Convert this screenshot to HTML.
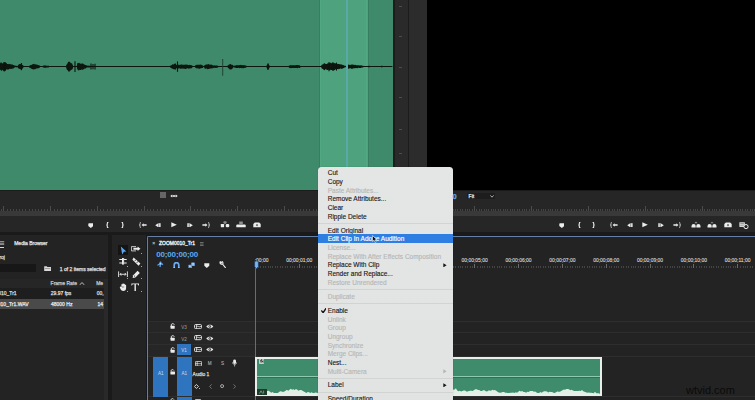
<!DOCTYPE html><html><head><meta charset="utf-8"><style>
html,body{margin:0;padding:0;}
body{width:755px;height:400px;overflow:hidden;position:relative;font-family:"Liberation Sans", sans-serif;background:#1a1a1a}
</style></head><body><div style="position:absolute;left:0px;top:0px;width:755px;height:400px;background:#1a1a1a;"></div><div style="position:absolute;left:0px;top:0px;width:393px;height:190px;background:#3f8a6a;"></div><div style="position:absolute;left:320px;top:0px;width:47.5px;height:190px;background:#4ea27d;"></div><div style="position:absolute;left:319px;top:0px;width:1px;height:190px;background:#397d60;"></div><div style="position:absolute;left:367.5px;top:0px;width:1px;height:190px;background:#397d60;"></div><div style="position:absolute;left:320.3px;top:0px;width:1px;height:190px;background:#51a883;"></div><div style="position:absolute;left:366.3px;top:0px;width:1px;height:190px;background:#51a883;"></div><svg style="position:absolute;left:0px;top:0px;" width="393" height="190" viewBox="0 0 393 190"><polygon points="0.0,63.57 0.6,62.54 1.2,62.30 1.8,62.99 2.4,63.35 3.0,63.71 3.6,62.66 4.2,62.72 4.8,61.95 5.4,62.45 6.0,62.67 6.6,63.23 7.2,64.03 7.8,63.94 8.4,64.14 9.0,63.81 9.6,63.99 10.2,64.50 10.8,64.10 11.4,64.51 12.0,64.54 12.6,64.47 13.2,65.00 13.8,65.07 14.4,65.31 15.0,66.10 15.6,65.58 16.2,65.71 16.8,65.93 17.4,66.10 18.0,65.40 18.6,64.55 19.2,64.14 19.8,64.01 20.4,63.89 21.0,63.81 21.6,64.35 22.2,64.91 22.8,64.92 23.4,65.70 24.0,66.10 24.6,66.10 25.2,66.10 25.8,66.10 26.4,66.10 27.0,66.10 27.6,66.10 28.2,66.10 28.8,66.10 29.4,65.79 30.0,65.48 30.6,65.11 31.2,64.92 31.8,64.65 32.4,64.23 33.0,64.32 33.6,63.97 34.2,63.83 34.8,64.38 35.4,64.41 36.0,64.07 36.6,64.76 37.2,64.84 37.8,64.77 38.4,65.28 39.0,65.31 39.6,65.47 40.2,66.10 40.8,66.10 41.4,66.10 42.0,66.10 42.6,66.10 43.2,65.72 43.8,65.58 44.4,65.42 45.0,65.37 45.6,65.52 46.2,65.63 46.8,65.66 47.4,65.65 48.0,65.67 48.6,65.85 49.2,66.10 49.8,66.10 50.4,66.10 51.0,66.10 51.6,66.10 52.2,66.10 52.8,66.10 53.4,66.10 54.0,66.10 54.6,66.10 55.2,66.10 55.8,66.10 56.4,66.10 57.0,66.10 57.6,66.10 58.2,66.10 58.8,66.10 59.4,66.10 60.0,66.10 60.6,66.10 61.2,66.10 61.8,66.10 62.4,66.10 63.0,66.10 63.6,66.10 64.2,66.10 64.8,66.10 65.4,66.10 66.0,66.10 66.6,64.40 67.2,63.88 67.8,62.72 68.4,62.82 69.0,62.34 69.6,61.38 70.2,62.29 70.8,63.16 71.4,63.21 72.0,63.22 72.6,64.75 73.2,66.10 73.8,66.10 74.4,66.10 75.0,66.10 75.6,66.10 76.2,66.10 76.8,66.10 77.4,62.93 78.0,62.99 78.6,63.10 79.2,62.80 79.8,63.58 80.4,63.77 81.0,63.48 81.6,63.80 82.2,63.44 82.8,63.55 83.4,63.74 84.0,64.40 84.6,64.47 85.2,64.90 85.8,64.99 86.4,65.01 87.0,66.10 87.6,65.54 88.2,65.43 88.8,65.68 89.4,65.78 90.0,65.80 90.6,66.10 91.2,66.10 91.8,66.10 92.4,66.10 93.0,66.10 93.6,66.10 94.2,66.10 94.8,66.10 95.4,66.10 96.0,66.10 96.6,66.10 97.2,66.10 97.8,66.10 98.4,66.10 99.0,66.10 99.6,66.10 100.2,66.10 100.8,66.10 101.4,66.10 102.0,66.10 102.6,66.10 103.2,66.10 103.8,66.10 104.4,66.10 105.0,66.10 105.6,66.10 106.2,66.10 106.8,66.10 107.4,66.10 108.0,66.10 108.6,66.10 109.2,66.10 109.8,66.10 110.4,66.10 111.0,66.10 111.6,66.10 112.2,66.10 112.8,66.10 113.4,66.10 114.0,66.10 114.6,66.10 115.2,66.10 115.8,66.10 116.4,66.10 117.0,66.10 117.6,66.10 118.2,66.10 118.8,66.10 119.4,66.10 120.0,66.10 120.6,66.10 121.2,66.10 121.8,66.10 122.4,66.10 123.0,66.10 123.6,66.10 124.2,66.10 124.8,66.10 125.4,66.10 126.0,66.10 126.6,66.10 127.2,66.10 127.8,66.10 128.4,66.10 129.0,66.10 129.6,66.10 130.2,66.10 130.8,66.10 131.4,66.10 132.0,66.10 132.6,66.10 133.2,66.10 133.8,66.10 134.4,66.10 135.0,66.10 135.6,66.10 136.2,66.10 136.8,66.10 137.4,66.10 138.0,66.10 138.6,66.10 139.2,66.10 139.8,66.10 140.4,66.10 141.0,66.10 141.6,66.10 142.2,66.10 142.8,66.10 143.4,66.10 144.0,66.10 144.6,66.10 145.2,66.10 145.8,66.10 146.4,66.10 147.0,66.10 147.6,66.10 148.2,66.10 148.8,66.10 149.4,66.10 150.0,66.10 150.6,66.10 151.2,66.10 151.8,66.10 152.4,66.10 153.0,66.10 153.6,66.10 154.2,66.10 154.8,66.10 155.4,66.10 156.0,66.10 156.6,66.10 157.2,66.10 157.8,66.10 158.4,66.10 159.0,66.10 159.6,66.10 160.2,66.10 160.8,66.10 161.4,66.10 162.0,66.10 162.6,66.10 163.2,66.10 163.8,66.10 164.4,66.10 165.0,66.10 165.6,66.10 166.2,66.10 166.8,66.10 167.4,66.10 168.0,66.10 168.6,66.10 169.2,66.10 169.8,66.10 170.4,65.71 171.0,65.28 171.6,65.24 172.2,64.48 172.8,64.32 173.4,64.54 174.0,64.23 174.6,63.47 175.2,63.83 175.8,63.34 176.4,65.22 177.0,64.74 177.6,65.11 178.2,64.56 178.8,64.89 179.4,64.98 180.0,64.39 180.6,64.64 181.2,64.67 181.8,64.37 182.4,64.75 183.0,64.74 183.6,64.72 184.2,64.81 184.8,64.66 185.4,64.51 186.0,64.64 186.6,64.61 187.2,64.63 187.8,64.73 188.4,65.05 189.0,64.98 189.6,64.69 190.2,64.99 190.8,64.91 191.4,65.22 192.0,65.19 192.6,66.10 193.2,66.10 193.8,66.10 194.4,66.10 195.0,66.10 195.6,64.97 196.2,64.97 196.8,64.68 197.4,64.78 198.0,64.78 198.6,64.79 199.2,64.77 199.8,64.65 200.4,64.55 201.0,64.86 201.6,64.79 202.2,65.27 202.8,65.39 203.4,66.10 204.0,66.10 204.6,65.13 205.2,64.59 205.8,64.90 206.4,64.48 207.0,64.25 207.6,64.44 208.2,64.15 208.8,64.09 209.4,64.72 210.0,64.51 210.6,64.79 211.2,64.52 211.8,64.73 212.4,65.16 213.0,64.92 213.6,65.72 214.2,65.36 214.8,65.56 215.4,65.56 216.0,65.48 216.6,65.47 217.2,65.41 217.8,65.75 218.4,66.10 219.0,66.10 219.6,66.10 220.2,66.10 220.8,66.10 221.4,66.10 222.0,66.10 222.6,66.10 223.2,66.10 223.8,66.10 224.4,66.10 225.0,66.10 225.6,66.10 226.2,66.10 226.8,66.10 227.4,66.10 228.0,65.14 228.6,64.99 229.2,64.28 229.8,64.53 230.4,63.85 231.0,64.46 231.6,64.66 232.2,64.64 232.8,64.97 233.4,65.85 234.0,66.10 234.6,65.38 235.2,65.50 235.8,65.48 236.4,65.31 237.0,65.05 237.6,65.14 238.2,65.18 238.8,65.21 239.4,64.95 240.0,65.23 240.6,64.84 241.2,64.92 241.8,65.11 242.4,65.19 243.0,65.08 243.6,65.30 244.2,65.18 244.8,65.37 245.4,65.57 246.0,65.62 246.6,66.10 247.2,66.10 247.8,66.10 248.4,66.10 249.0,66.10 249.6,66.10 250.2,66.10 250.8,66.10 251.4,66.10 252.0,66.10 252.6,66.10 253.2,66.10 253.8,66.10 254.4,66.10 255.0,66.10 255.6,66.10 256.2,66.10 256.8,66.10 257.4,66.10 258.0,66.10 258.6,66.10 259.2,66.10 259.8,66.10 260.4,66.10 261.0,66.10 261.6,66.10 262.2,66.10 262.8,66.10 263.4,66.10 264.0,66.10 264.6,66.10 265.2,66.10 265.8,66.10 266.4,66.10 267.0,64.68 267.6,64.23 268.2,63.31 268.8,64.42 269.4,65.49 270.0,66.10 270.6,66.10 271.2,66.10 271.8,66.10 272.4,66.10 273.0,66.10 273.6,66.10 274.2,66.10 274.8,66.10 275.4,66.10 276.0,66.10 276.6,66.10 277.2,66.10 277.8,66.10 278.4,66.10 279.0,66.10 279.6,66.10 280.2,66.10 280.8,66.10 281.4,66.10 282.0,66.10 282.6,66.10 283.2,66.10 283.8,66.10 284.4,66.10 285.0,66.10 285.6,66.10 286.2,66.10 286.8,66.10 287.4,66.10 288.0,66.10 288.6,66.10 289.2,65.56 289.8,65.46 290.4,65.09 291.0,65.36 291.6,65.28 292.2,65.39 292.8,65.12 293.4,65.24 294.0,65.33 294.6,65.28 295.2,65.31 295.8,65.19 296.4,65.07 297.0,65.03 297.6,65.10 298.2,65.31 298.8,65.11 299.4,65.29 300.0,65.63 300.6,66.10 301.2,66.10 301.8,66.10 302.4,66.10 303.0,66.10 303.6,66.10 304.2,66.10 304.8,66.10 305.4,66.10 306.0,66.10 306.6,66.10 307.2,66.10 307.8,66.10 308.4,66.10 309.0,66.10 309.6,66.10 310.2,66.10 310.8,66.10 311.4,66.10 312.0,66.10 312.6,66.10 313.2,66.10 313.8,66.10 314.4,66.10 315.0,66.10 315.6,66.10 316.2,66.10 316.8,66.10 317.4,66.10 318.0,66.10 318.6,66.10 319.2,66.10 319.8,66.10 320.4,66.10 321.0,66.10 321.6,65.07 322.2,64.54 322.8,64.55 323.4,63.90 324.0,63.27 324.6,63.20 325.2,63.70 325.8,64.00 326.4,63.99 327.0,63.91 327.6,63.32 328.2,63.14 328.8,63.21 329.4,62.77 330.0,63.07 330.6,62.84 331.2,62.72 331.8,63.54 332.4,62.75 333.0,62.78 333.6,63.13 334.2,63.22 334.8,62.98 335.4,63.23 336.0,63.87 336.6,63.36 337.2,63.67 337.8,64.28 338.4,63.94 339.0,64.03 339.6,64.25 340.2,64.38 340.8,64.17 341.4,64.24 342.0,65.01 342.6,64.65 343.2,65.03 343.8,65.35 344.4,65.62 345.0,66.10 345.6,66.10 346.2,64.81 346.8,64.27 347.4,64.39 348.0,64.37 348.6,64.84 349.2,64.69 349.8,65.03 350.4,64.77 351.0,65.00 351.6,64.91 352.2,65.13 352.8,64.66 353.4,64.65 354.0,64.70 354.6,65.04 355.2,64.73 355.8,65.12 356.4,65.20 357.0,65.33 357.6,65.28 358.2,65.34 358.8,65.27 359.4,65.38 360.0,65.23 360.6,65.40 361.2,65.37 361.8,65.54 362.4,65.65 363.0,65.79 363.6,66.10 364.2,66.10 364.8,66.10 365.4,66.10 366.0,66.10 366.6,66.10 367.2,66.10 367.8,66.10 368.4,65.92 369.0,65.66 369.6,65.87 370.2,66.10 370.8,66.10 371.4,66.10 372.0,66.10 372.6,66.10 373.2,66.10 373.8,66.10 374.4,66.10 375.0,66.10 375.6,66.10 376.2,66.10 376.8,66.10 377.4,66.10 378.0,66.10 378.6,66.10 379.2,66.10 379.8,66.10 380.4,66.10 381.0,66.10 381.6,65.87 382.2,65.66 382.8,66.10 383.4,66.10 384.0,66.10 384.6,66.10 385.2,66.10 385.8,66.10 386.4,66.10 387.0,66.10 387.6,66.10 388.2,66.10 388.8,66.10 389.4,66.10 390.0,66.10 390.6,66.10 391.2,66.10 391.8,66.10 392.4,66.10 392.4,67.10 391.8,67.10 391.2,67.10 390.6,67.10 390.0,67.10 389.4,67.10 388.8,67.10 388.2,67.10 387.6,67.10 387.0,67.10 386.4,67.10 385.8,67.10 385.2,67.10 384.6,67.10 384.0,67.10 383.4,67.10 382.8,67.10 382.2,67.34 381.6,67.44 381.0,67.10 380.4,67.10 379.8,67.10 379.2,67.10 378.6,67.10 378.0,67.10 377.4,67.10 376.8,67.10 376.2,67.10 375.6,67.10 375.0,67.10 374.4,67.10 373.8,67.10 373.2,67.10 372.6,67.10 372.0,67.10 371.4,67.10 370.8,67.10 370.2,67.10 369.6,67.30 369.0,67.32 368.4,67.22 367.8,67.10 367.2,67.10 366.6,67.10 366.0,67.10 365.4,67.10 364.8,67.10 364.2,67.10 363.6,67.10 363.0,67.38 362.4,67.46 361.8,67.43 361.2,67.69 360.6,67.91 360.0,67.94 359.4,68.07 358.8,67.79 358.2,67.87 357.6,68.24 357.0,68.24 356.4,67.88 355.8,68.12 355.2,68.24 354.6,68.17 354.0,68.15 353.4,68.43 352.8,68.11 352.2,68.52 351.6,68.61 351.0,68.33 350.4,68.33 349.8,68.48 349.2,68.20 348.6,68.80 348.0,68.70 347.4,68.60 346.8,68.36 346.2,68.66 345.6,67.10 345.0,67.10 344.4,67.71 343.8,68.19 343.2,68.07 342.6,68.64 342.0,68.48 341.4,68.93 340.8,68.52 340.2,68.55 339.6,68.91 339.0,68.85 338.4,69.28 337.8,69.12 337.2,68.99 336.6,69.39 336.0,69.45 335.4,69.35 334.8,70.05 334.2,70.22 333.6,69.94 333.0,70.70 332.4,69.81 331.8,69.90 331.2,69.88 330.6,69.64 330.0,70.17 329.4,70.37 328.8,69.43 328.2,70.12 327.6,69.96 327.0,70.06 326.4,69.45 325.8,69.00 325.2,69.51 324.6,70.35 324.0,69.95 323.4,69.61 322.8,68.96 322.2,68.71 321.6,68.01 321.0,67.10 320.4,67.10 319.8,67.10 319.2,67.10 318.6,67.10 318.0,67.10 317.4,67.10 316.8,67.10 316.2,67.10 315.6,67.10 315.0,67.10 314.4,67.10 313.8,67.10 313.2,67.10 312.6,67.10 312.0,67.10 311.4,67.10 310.8,67.10 310.2,67.10 309.6,67.10 309.0,67.10 308.4,67.10 307.8,67.10 307.2,67.10 306.6,67.10 306.0,67.10 305.4,67.10 304.8,67.10 304.2,67.10 303.6,67.10 303.0,67.10 302.4,67.10 301.8,67.10 301.2,67.10 300.6,67.10 300.0,67.89 299.4,67.88 298.8,67.73 298.2,67.86 297.6,68.18 297.0,68.12 296.4,68.10 295.8,67.97 295.2,67.88 294.6,68.08 294.0,68.01 293.4,68.12 292.8,68.09 292.2,68.00 291.6,67.94 291.0,68.18 290.4,67.92 289.8,68.04 289.2,67.75 288.6,67.10 288.0,67.10 287.4,67.10 286.8,67.10 286.2,67.10 285.6,67.10 285.0,67.10 284.4,67.10 283.8,67.10 283.2,67.10 282.6,67.10 282.0,67.10 281.4,67.10 280.8,67.10 280.2,67.10 279.6,67.10 279.0,67.10 278.4,67.10 277.8,67.10 277.2,67.10 276.6,67.10 276.0,67.10 275.4,67.10 274.8,67.10 274.2,67.10 273.6,67.10 273.0,67.10 272.4,67.10 271.8,67.10 271.2,67.10 270.6,67.10 270.0,67.10 269.4,67.78 268.8,68.75 268.2,69.70 267.6,69.68 267.0,68.45 266.4,67.10 265.8,67.10 265.2,67.10 264.6,67.10 264.0,67.10 263.4,67.10 262.8,67.10 262.2,67.10 261.6,67.10 261.0,67.10 260.4,67.10 259.8,67.10 259.2,67.10 258.6,67.10 258.0,67.10 257.4,67.10 256.8,67.10 256.2,67.10 255.6,67.10 255.0,67.10 254.4,67.10 253.8,67.10 253.2,67.10 252.6,67.10 252.0,67.10 251.4,67.10 250.8,67.10 250.2,67.10 249.6,67.10 249.0,67.10 248.4,67.10 247.8,67.10 247.2,67.10 246.6,67.10 246.0,67.85 245.4,67.66 244.8,67.81 244.2,67.99 243.6,68.14 243.0,68.26 242.4,68.07 241.8,68.27 241.2,68.08 240.6,67.93 240.0,68.12 239.4,68.16 238.8,67.87 238.2,67.85 237.6,67.90 237.0,67.92 236.4,67.89 235.8,67.79 235.2,67.72 234.6,67.70 234.0,67.10 233.4,67.31 232.8,68.43 232.2,68.48 231.6,69.15 231.0,69.40 230.4,69.50 229.8,69.39 229.2,68.73 228.6,68.19 228.0,68.12 227.4,67.10 226.8,67.10 226.2,67.10 225.6,67.10 225.0,67.10 224.4,67.10 223.8,67.10 223.2,67.10 222.6,67.10 222.0,67.10 221.4,67.10 220.8,67.10 220.2,67.10 219.6,67.10 219.0,67.10 218.4,67.10 217.8,67.70 217.2,67.58 216.6,67.92 216.0,67.66 215.4,67.95 214.8,67.70 214.2,67.92 213.6,67.81 213.0,68.22 212.4,68.23 211.8,68.40 211.2,68.21 210.6,68.49 210.0,68.57 209.4,68.68 208.8,68.99 208.2,69.12 207.6,69.36 207.0,69.01 206.4,68.37 205.8,68.67 205.2,68.68 204.6,68.43 204.0,67.10 203.4,67.10 202.8,67.89 202.2,68.10 201.6,68.02 201.0,68.57 200.4,68.23 199.8,68.66 199.2,68.72 198.6,68.46 198.0,68.53 197.4,68.36 196.8,68.25 196.2,68.33 195.6,68.10 195.0,67.10 194.4,67.10 193.8,67.10 193.2,67.10 192.6,67.10 192.0,68.02 191.4,68.23 190.8,68.42 190.2,68.33 189.6,68.40 189.0,68.41 188.4,68.66 187.8,68.31 187.2,68.23 186.6,68.61 186.0,68.90 185.4,68.91 184.8,68.61 184.2,68.94 183.6,68.59 183.0,68.70 182.4,68.48 181.8,68.41 181.2,68.83 180.6,68.83 180.0,68.60 179.4,68.15 178.8,68.44 178.2,68.45 177.6,68.48 177.0,68.41 176.4,67.99 175.8,69.28 175.2,69.90 174.6,69.20 174.0,69.37 173.4,69.14 172.8,68.68 172.2,68.64 171.6,68.27 171.0,67.98 170.4,67.39 169.8,67.10 169.2,67.10 168.6,67.10 168.0,67.10 167.4,67.10 166.8,67.10 166.2,67.10 165.6,67.10 165.0,67.10 164.4,67.10 163.8,67.10 163.2,67.10 162.6,67.10 162.0,67.10 161.4,67.10 160.8,67.10 160.2,67.10 159.6,67.10 159.0,67.10 158.4,67.10 157.8,67.10 157.2,67.10 156.6,67.10 156.0,67.10 155.4,67.10 154.8,67.10 154.2,67.10 153.6,67.10 153.0,67.10 152.4,67.10 151.8,67.10 151.2,67.10 150.6,67.10 150.0,67.10 149.4,67.10 148.8,67.10 148.2,67.10 147.6,67.10 147.0,67.10 146.4,67.10 145.8,67.10 145.2,67.10 144.6,67.10 144.0,67.10 143.4,67.10 142.8,67.10 142.2,67.10 141.6,67.10 141.0,67.10 140.4,67.10 139.8,67.10 139.2,67.10 138.6,67.10 138.0,67.10 137.4,67.10 136.8,67.10 136.2,67.10 135.6,67.10 135.0,67.10 134.4,67.10 133.8,67.10 133.2,67.10 132.6,67.10 132.0,67.10 131.4,67.10 130.8,67.10 130.2,67.10 129.6,67.10 129.0,67.10 128.4,67.10 127.8,67.10 127.2,67.10 126.6,67.10 126.0,67.10 125.4,67.10 124.8,67.10 124.2,67.10 123.6,67.10 123.0,67.10 122.4,67.10 121.8,67.10 121.2,67.10 120.6,67.10 120.0,67.10 119.4,67.10 118.8,67.10 118.2,67.10 117.6,67.10 117.0,67.10 116.4,67.10 115.8,67.10 115.2,67.10 114.6,67.10 114.0,67.10 113.4,67.10 112.8,67.10 112.2,67.10 111.6,67.10 111.0,67.10 110.4,67.10 109.8,67.10 109.2,67.10 108.6,67.10 108.0,67.10 107.4,67.10 106.8,67.10 106.2,67.10 105.6,67.10 105.0,67.10 104.4,67.10 103.8,67.10 103.2,67.10 102.6,67.10 102.0,67.10 101.4,67.10 100.8,67.10 100.2,67.10 99.6,67.10 99.0,67.10 98.4,67.10 97.8,67.10 97.2,67.10 96.6,67.10 96.0,67.10 95.4,67.10 94.8,67.10 94.2,67.10 93.6,67.10 93.0,67.10 92.4,67.10 91.8,67.10 91.2,67.10 90.6,67.10 90.0,67.47 89.4,67.43 88.8,67.52 88.2,67.57 87.6,67.67 87.0,67.10 86.4,67.95 85.8,68.47 85.2,68.47 84.6,68.48 84.0,69.04 83.4,69.39 82.8,69.61 82.2,69.93 81.6,69.29 81.0,69.98 80.4,70.09 79.8,69.74 79.2,70.21 78.6,70.64 78.0,69.58 77.4,69.80 76.8,67.10 76.2,67.10 75.6,67.10 75.0,67.10 74.4,67.10 73.8,67.10 73.2,67.10 72.6,69.15 72.0,69.29 71.4,69.90 70.8,70.06 70.2,70.94 69.6,72.05 69.0,70.49 68.4,70.52 67.8,69.89 67.2,70.26 66.6,69.02 66.0,67.10 65.4,67.10 64.8,67.10 64.2,67.10 63.6,67.10 63.0,67.10 62.4,67.10 61.8,67.10 61.2,67.10 60.6,67.10 60.0,67.10 59.4,67.10 58.8,67.10 58.2,67.10 57.6,67.10 57.0,67.10 56.4,67.10 55.8,67.10 55.2,67.10 54.6,67.10 54.0,67.10 53.4,67.10 52.8,67.10 52.2,67.10 51.6,67.10 51.0,67.10 50.4,67.10 49.8,67.10 49.2,67.10 48.6,67.40 48.0,67.44 47.4,67.53 46.8,67.54 46.2,67.78 45.6,67.68 45.0,67.80 44.4,67.73 43.8,67.41 43.2,67.51 42.6,67.10 42.0,67.10 41.4,67.10 40.8,67.10 40.2,67.10 39.6,67.64 39.0,67.98 38.4,68.15 37.8,68.23 37.2,68.52 36.6,68.48 36.0,68.53 35.4,69.20 34.8,68.93 34.2,69.41 33.6,69.52 33.0,69.22 32.4,69.37 31.8,68.64 31.2,68.76 30.6,68.07 30.0,67.92 29.4,67.49 28.8,67.10 28.2,67.10 27.6,67.10 27.0,67.10 26.4,67.10 25.8,67.10 25.2,67.10 24.6,67.10 24.0,67.10 23.4,67.35 22.8,68.47 22.2,68.73 21.6,69.00 21.0,69.48 20.4,69.19 19.8,69.11 19.2,68.65 18.6,68.52 18.0,68.11 17.4,67.10 16.8,67.36 16.2,67.59 15.6,67.36 15.0,67.10 14.4,67.71 13.8,68.31 13.2,68.40 12.6,68.67 12.0,68.55 11.4,68.90 10.8,68.90 10.2,68.82 9.6,68.79 9.0,69.15 8.4,69.44 7.8,69.75 7.2,69.14 6.6,69.39 6.0,69.46 5.4,70.50 4.8,71.74 4.2,70.63 3.6,71.10 3.0,69.51 2.4,70.37 1.8,70.86 1.2,70.66 0.6,69.90 0.0,69.44" fill="#0d160f"/><line x1="4" y1="62.00" x2="4" y2="71.20" stroke="#0c140e" stroke-width="1.1"/><line x1="5.2" y1="62.40" x2="5.2" y2="70.80" stroke="#0c140e" stroke-width="1.1"/><line x1="21.5" y1="63.00" x2="21.5" y2="70.20" stroke="#0c140e" stroke-width="1.1"/><line x1="68.5" y1="61.80" x2="68.5" y2="71.40" stroke="#0c140e" stroke-width="1.1"/><line x1="75" y1="61.20" x2="75" y2="72.00" stroke="#0c140e" stroke-width="1.1"/><line x1="91" y1="63.60" x2="91" y2="69.60" stroke="#0c140e" stroke-width="1.1"/><line x1="93" y1="64.00" x2="93" y2="69.20" stroke="#0c140e" stroke-width="1.1"/><line x1="95" y1="63.80" x2="95" y2="69.40" stroke="#0c140e" stroke-width="1.1"/><line x1="177.5" y1="61.40" x2="177.5" y2="71.80" stroke="#0c140e" stroke-width="1.1"/><line x1="268" y1="63.50" x2="268" y2="69.70" stroke="#0c140e" stroke-width="1.1"/><line x1="329" y1="62.00" x2="329" y2="71.20" stroke="#0c140e" stroke-width="1.1"/><line x1="333" y1="62.20" x2="333" y2="71.00" stroke="#0c140e" stroke-width="1.1"/><line x1="336.5" y1="62.60" x2="336.5" y2="70.60" stroke="#0c140e" stroke-width="1.1"/><line x1="352" y1="64.20" x2="352" y2="69.00" stroke="#0c140e" stroke-width="1.1"/><line x1="222.7" y1="59" x2="222.7" y2="75.8" stroke="#1d3d2e" stroke-width="0.9"/></svg><div style="position:absolute;left:346.2px;top:0px;width:1.7px;height:190px;background:#58a9a8;"></div><div style="position:absolute;left:0px;top:189.6px;width:393px;height:1.8px;background:#1c1c1c;"></div><div style="position:absolute;left:393px;top:0px;width:2px;height:232px;background:#1c1c1c;"></div><div style="position:absolute;left:395px;top:0px;width:13px;height:232px;background:#2a2a2a;"></div><div style="position:absolute;left:408px;top:0px;width:1px;height:232px;background:#1c1c1c;"></div><div style="position:absolute;left:409px;top:0px;width:18px;height:232px;background:#2c2c2c;"></div><div style="position:absolute;left:399px;top:5.5px;width:3px;height:1px;background:#4c4c4c;"></div><div style="position:absolute;left:399px;top:36.1px;width:3px;height:1px;background:#4c4c4c;"></div><div style="position:absolute;left:399px;top:67.2px;width:3px;height:1px;background:#4c4c4c;"></div><div style="position:absolute;left:399px;top:97.3px;width:3px;height:1px;background:#4c4c4c;"></div><div style="position:absolute;left:399px;top:128.5px;width:3px;height:1px;background:#4c4c4c;"></div><div style="position:absolute;left:399px;top:153.0px;width:3px;height:1px;background:#4c4c4c;"></div><div style="position:absolute;left:427px;top:0px;width:328px;height:190px;background:#000;"></div><div style="position:absolute;left:0px;top:191px;width:393px;height:41px;background:#262626;"></div><div style="position:absolute;left:0.5px;top:209px;width:1px;height:2.3px;background:#444444;"></div><div style="position:absolute;left:3.3px;top:205.8px;width:1.1px;height:5.5px;background:#4c4c4c;"></div><div style="position:absolute;left:6.5px;top:209px;width:1px;height:2.3px;background:#444444;"></div><div style="position:absolute;left:9.5px;top:209px;width:1px;height:2.3px;background:#444444;"></div><div style="position:absolute;left:13.0px;top:209px;width:1px;height:2.3px;background:#444444;"></div><div style="position:absolute;left:16.0px;top:209px;width:1px;height:2.3px;background:#444444;"></div><div style="position:absolute;left:19.0px;top:209px;width:1px;height:2.3px;background:#444444;"></div><div style="position:absolute;left:22.0px;top:209px;width:1px;height:2.3px;background:#444444;"></div><div style="position:absolute;left:25.0px;top:209px;width:1px;height:2.3px;background:#444444;"></div><div style="position:absolute;left:28.5px;top:209px;width:1px;height:2.3px;background:#444444;"></div><div style="position:absolute;left:31.5px;top:209px;width:1px;height:2.3px;background:#444444;"></div><div style="position:absolute;left:34.5px;top:209px;width:1px;height:2.3px;background:#444444;"></div><div style="position:absolute;left:37.5px;top:209px;width:1px;height:2.3px;background:#444444;"></div><div style="position:absolute;left:41.0px;top:209px;width:1px;height:2.3px;background:#444444;"></div><div style="position:absolute;left:44.0px;top:209px;width:1px;height:2.3px;background:#444444;"></div><div style="position:absolute;left:47.0px;top:209px;width:1px;height:2.3px;background:#444444;"></div><div style="position:absolute;left:49.8px;top:205.8px;width:1.1px;height:5.5px;background:#4c4c4c;"></div><div style="position:absolute;left:53.5px;top:209px;width:1px;height:2.3px;background:#444444;"></div><div style="position:absolute;left:56.5px;top:209px;width:1px;height:2.3px;background:#444444;"></div><div style="position:absolute;left:59.5px;top:209px;width:1px;height:2.3px;background:#444444;"></div><div style="position:absolute;left:62.5px;top:209px;width:1px;height:2.3px;background:#444444;"></div><div style="position:absolute;left:66.0px;top:209px;width:1px;height:2.3px;background:#444444;"></div><div style="position:absolute;left:69.0px;top:209px;width:1px;height:2.3px;background:#444444;"></div><div style="position:absolute;left:72.0px;top:209px;width:1px;height:2.3px;background:#444444;"></div><div style="position:absolute;left:75.0px;top:209px;width:1px;height:2.3px;background:#444444;"></div><div style="position:absolute;left:78.5px;top:209px;width:1px;height:2.3px;background:#444444;"></div><div style="position:absolute;left:81.5px;top:209px;width:1px;height:2.3px;background:#444444;"></div><div style="position:absolute;left:84.5px;top:209px;width:1px;height:2.3px;background:#444444;"></div><div style="position:absolute;left:87.5px;top:209px;width:1px;height:2.3px;background:#444444;"></div><div style="position:absolute;left:91.0px;top:209px;width:1px;height:2.3px;background:#444444;"></div><div style="position:absolute;left:94.0px;top:209px;width:1px;height:2.3px;background:#444444;"></div><div style="position:absolute;left:96.8px;top:205.8px;width:1.1px;height:5.5px;background:#4c4c4c;"></div><div style="position:absolute;left:100.0px;top:209px;width:1px;height:2.3px;background:#444444;"></div><div style="position:absolute;left:103.0px;top:209px;width:1px;height:2.3px;background:#444444;"></div><div style="position:absolute;left:106.5px;top:209px;width:1px;height:2.3px;background:#444444;"></div><div style="position:absolute;left:109.5px;top:209px;width:1px;height:2.3px;background:#444444;"></div><div style="position:absolute;left:112.5px;top:209px;width:1px;height:2.3px;background:#444444;"></div><div style="position:absolute;left:115.5px;top:209px;width:1px;height:2.3px;background:#444444;"></div><div style="position:absolute;left:119.0px;top:209px;width:1px;height:2.3px;background:#444444;"></div><div style="position:absolute;left:122.0px;top:209px;width:1px;height:2.3px;background:#444444;"></div><div style="position:absolute;left:125.0px;top:209px;width:1px;height:2.3px;background:#444444;"></div><div style="position:absolute;left:128.0px;top:209px;width:1px;height:2.3px;background:#444444;"></div><div style="position:absolute;left:131.5px;top:209px;width:1px;height:2.3px;background:#444444;"></div><div style="position:absolute;left:134.5px;top:209px;width:1px;height:2.3px;background:#444444;"></div><div style="position:absolute;left:137.5px;top:209px;width:1px;height:2.3px;background:#444444;"></div><div style="position:absolute;left:140.5px;top:209px;width:1px;height:2.3px;background:#444444;"></div><div style="position:absolute;left:143.8px;top:205.8px;width:1.1px;height:5.5px;background:#4c4c4c;"></div><div style="position:absolute;left:147.0px;top:209px;width:1px;height:2.3px;background:#444444;"></div><div style="position:absolute;left:150.0px;top:209px;width:1px;height:2.3px;background:#444444;"></div><div style="position:absolute;left:153.0px;top:209px;width:1px;height:2.3px;background:#444444;"></div><div style="position:absolute;left:156.5px;top:209px;width:1px;height:2.3px;background:#444444;"></div><div style="position:absolute;left:159.5px;top:209px;width:1px;height:2.3px;background:#444444;"></div><div style="position:absolute;left:162.5px;top:209px;width:1px;height:2.3px;background:#444444;"></div><div style="position:absolute;left:165.5px;top:209px;width:1px;height:2.3px;background:#444444;"></div><div style="position:absolute;left:169.0px;top:209px;width:1px;height:2.3px;background:#444444;"></div><div style="position:absolute;left:172.0px;top:209px;width:1px;height:2.3px;background:#444444;"></div><div style="position:absolute;left:175.0px;top:209px;width:1px;height:2.3px;background:#444444;"></div><div style="position:absolute;left:178.0px;top:209px;width:1px;height:2.3px;background:#444444;"></div><div style="position:absolute;left:181.0px;top:209px;width:1px;height:2.3px;background:#444444;"></div><div style="position:absolute;left:184.5px;top:209px;width:1px;height:2.3px;background:#444444;"></div><div style="position:absolute;left:187.5px;top:209px;width:1px;height:2.3px;background:#444444;"></div><div style="position:absolute;left:190.3px;top:205.8px;width:1.1px;height:5.5px;background:#4c4c4c;"></div><div style="position:absolute;left:193.5px;top:209px;width:1px;height:2.3px;background:#444444;"></div><div style="position:absolute;left:197.0px;top:209px;width:1px;height:2.3px;background:#444444;"></div><div style="position:absolute;left:200.0px;top:209px;width:1px;height:2.3px;background:#444444;"></div><div style="position:absolute;left:203.0px;top:209px;width:1px;height:2.3px;background:#444444;"></div><div style="position:absolute;left:206.0px;top:209px;width:1px;height:2.3px;background:#444444;"></div><div style="position:absolute;left:209.5px;top:209px;width:1px;height:2.3px;background:#444444;"></div><div style="position:absolute;left:212.5px;top:209px;width:1px;height:2.3px;background:#444444;"></div><div style="position:absolute;left:215.5px;top:209px;width:1px;height:2.3px;background:#444444;"></div><div style="position:absolute;left:218.5px;top:209px;width:1px;height:2.3px;background:#444444;"></div><div style="position:absolute;left:222.0px;top:209px;width:1px;height:2.3px;background:#444444;"></div><div style="position:absolute;left:225.0px;top:209px;width:1px;height:2.3px;background:#444444;"></div><div style="position:absolute;left:228.0px;top:209px;width:1px;height:2.3px;background:#444444;"></div><div style="position:absolute;left:231.0px;top:209px;width:1px;height:2.3px;background:#444444;"></div><div style="position:absolute;left:234.5px;top:209px;width:1px;height:2.3px;background:#444444;"></div><div style="position:absolute;left:237.3px;top:205.8px;width:1.1px;height:5.5px;background:#4c4c4c;"></div><div style="position:absolute;left:240.5px;top:209px;width:1px;height:2.3px;background:#444444;"></div><div style="position:absolute;left:243.5px;top:209px;width:1px;height:2.3px;background:#444444;"></div><div style="position:absolute;left:247.0px;top:209px;width:1px;height:2.3px;background:#444444;"></div><div style="position:absolute;left:250.0px;top:209px;width:1px;height:2.3px;background:#444444;"></div><div style="position:absolute;left:253.0px;top:209px;width:1px;height:2.3px;background:#444444;"></div><div style="position:absolute;left:256.0px;top:209px;width:1px;height:2.3px;background:#444444;"></div><div style="position:absolute;left:259.0px;top:209px;width:1px;height:2.3px;background:#444444;"></div><div style="position:absolute;left:262.5px;top:209px;width:1px;height:2.3px;background:#444444;"></div><div style="position:absolute;left:265.5px;top:209px;width:1px;height:2.3px;background:#444444;"></div><div style="position:absolute;left:268.5px;top:209px;width:1px;height:2.3px;background:#444444;"></div><div style="position:absolute;left:271.5px;top:209px;width:1px;height:2.3px;background:#444444;"></div><div style="position:absolute;left:275.0px;top:209px;width:1px;height:2.3px;background:#444444;"></div><div style="position:absolute;left:278.0px;top:209px;width:1px;height:2.3px;background:#444444;"></div><div style="position:absolute;left:281.0px;top:209px;width:1px;height:2.3px;background:#444444;"></div><div style="position:absolute;left:283.8px;top:205.8px;width:1.1px;height:5.5px;background:#4c4c4c;"></div><div style="position:absolute;left:287.5px;top:209px;width:1px;height:2.3px;background:#444444;"></div><div style="position:absolute;left:290.5px;top:209px;width:1px;height:2.3px;background:#444444;"></div><div style="position:absolute;left:293.5px;top:209px;width:1px;height:2.3px;background:#444444;"></div><div style="position:absolute;left:296.5px;top:209px;width:1px;height:2.3px;background:#444444;"></div><div style="position:absolute;left:300.0px;top:209px;width:1px;height:2.3px;background:#444444;"></div><div style="position:absolute;left:303.0px;top:209px;width:1px;height:2.3px;background:#444444;"></div><div style="position:absolute;left:306.0px;top:209px;width:1px;height:2.3px;background:#444444;"></div><div style="position:absolute;left:309.0px;top:209px;width:1px;height:2.3px;background:#444444;"></div><div style="position:absolute;left:312.5px;top:209px;width:1px;height:2.3px;background:#444444;"></div><div style="position:absolute;left:315.5px;top:209px;width:1px;height:2.3px;background:#444444;"></div><div style="position:absolute;left:318.5px;top:209px;width:1px;height:2.3px;background:#444444;"></div><div style="position:absolute;left:321.5px;top:209px;width:1px;height:2.3px;background:#444444;"></div><div style="position:absolute;left:325.0px;top:209px;width:1px;height:2.3px;background:#444444;"></div><div style="position:absolute;left:328.0px;top:209px;width:1px;height:2.3px;background:#444444;"></div><div style="position:absolute;left:330.8px;top:205.8px;width:1.1px;height:5.5px;background:#4c4c4c;"></div><div style="position:absolute;left:334.0px;top:209px;width:1px;height:2.3px;background:#444444;"></div><div style="position:absolute;left:337.0px;top:209px;width:1px;height:2.3px;background:#444444;"></div><div style="position:absolute;left:340.5px;top:209px;width:1px;height:2.3px;background:#444444;"></div><div style="position:absolute;left:343.5px;top:209px;width:1px;height:2.3px;background:#444444;"></div><div style="position:absolute;left:346.5px;top:209px;width:1px;height:2.3px;background:#444444;"></div><div style="position:absolute;left:349.5px;top:209px;width:1px;height:2.3px;background:#444444;"></div><div style="position:absolute;left:353.0px;top:209px;width:1px;height:2.3px;background:#444444;"></div><div style="position:absolute;left:356.0px;top:209px;width:1px;height:2.3px;background:#444444;"></div><div style="position:absolute;left:359.0px;top:209px;width:1px;height:2.3px;background:#444444;"></div><div style="position:absolute;left:362.0px;top:209px;width:1px;height:2.3px;background:#444444;"></div><div style="position:absolute;left:365.5px;top:209px;width:1px;height:2.3px;background:#444444;"></div><div style="position:absolute;left:368.5px;top:209px;width:1px;height:2.3px;background:#444444;"></div><div style="position:absolute;left:371.5px;top:209px;width:1px;height:2.3px;background:#444444;"></div><div style="position:absolute;left:374.5px;top:209px;width:1px;height:2.3px;background:#444444;"></div><div style="position:absolute;left:377.8px;top:205.8px;width:1.1px;height:5.5px;background:#4c4c4c;"></div><div style="position:absolute;left:381.0px;top:209px;width:1px;height:2.3px;background:#444444;"></div><div style="position:absolute;left:384.0px;top:209px;width:1px;height:2.3px;background:#444444;"></div><div style="position:absolute;left:387.0px;top:209px;width:1px;height:2.3px;background:#444444;"></div><div style="position:absolute;left:390.5px;top:209px;width:1px;height:2.3px;background:#444444;"></div><div style="position:absolute;left:0px;top:211.3px;width:393px;height:5px;background:#393939;"></div><div style="position:absolute;left:427px;top:191px;width:328px;height:41px;background:#262626;"></div><div style="position:absolute;left:428.5px;top:209px;width:1px;height:2.3px;background:#444444;"></div><div style="position:absolute;left:431.0px;top:209px;width:1px;height:2.3px;background:#444444;"></div><div style="position:absolute;left:433.5px;top:209px;width:1px;height:2.3px;background:#444444;"></div><div style="position:absolute;left:436.0px;top:209px;width:1px;height:2.3px;background:#444444;"></div><div style="position:absolute;left:438.0px;top:209px;width:1px;height:2.3px;background:#444444;"></div><div style="position:absolute;left:440.5px;top:209px;width:1px;height:2.3px;background:#444444;"></div><div style="position:absolute;left:443.0px;top:209px;width:1px;height:2.3px;background:#444444;"></div><div style="position:absolute;left:445.5px;top:209px;width:1px;height:2.3px;background:#444444;"></div><div style="position:absolute;left:447.5px;top:209px;width:1px;height:2.3px;background:#444444;"></div><div style="position:absolute;left:450.0px;top:209px;width:1px;height:2.3px;background:#444444;"></div><div style="position:absolute;left:452.5px;top:209px;width:1px;height:2.3px;background:#444444;"></div><div style="position:absolute;left:455.0px;top:209px;width:1px;height:2.3px;background:#444444;"></div><div style="position:absolute;left:457.0px;top:209px;width:1px;height:2.3px;background:#444444;"></div><div style="position:absolute;left:459.5px;top:209px;width:1px;height:2.3px;background:#444444;"></div><div style="position:absolute;left:462.0px;top:209px;width:1px;height:2.3px;background:#444444;"></div><div style="position:absolute;left:464.5px;top:209px;width:1px;height:2.3px;background:#444444;"></div><div style="position:absolute;left:466.5px;top:209px;width:1px;height:2.3px;background:#444444;"></div><div style="position:absolute;left:469.0px;top:209px;width:1px;height:2.3px;background:#444444;"></div><div style="position:absolute;left:471.5px;top:209px;width:1px;height:2.3px;background:#444444;"></div><div style="position:absolute;left:473.8px;top:205.8px;width:1.1px;height:5.5px;background:#4c4c4c;"></div><div style="position:absolute;left:476.0px;top:209px;width:1px;height:2.3px;background:#444444;"></div><div style="position:absolute;left:478.5px;top:209px;width:1px;height:2.3px;background:#444444;"></div><div style="position:absolute;left:481.0px;top:209px;width:1px;height:2.3px;background:#444444;"></div><div style="position:absolute;left:483.5px;top:209px;width:1px;height:2.3px;background:#444444;"></div><div style="position:absolute;left:485.5px;top:209px;width:1px;height:2.3px;background:#444444;"></div><div style="position:absolute;left:488.0px;top:209px;width:1px;height:2.3px;background:#444444;"></div><div style="position:absolute;left:490.5px;top:209px;width:1px;height:2.3px;background:#444444;"></div><div style="position:absolute;left:493.0px;top:209px;width:1px;height:2.3px;background:#444444;"></div><div style="position:absolute;left:495.0px;top:209px;width:1px;height:2.3px;background:#444444;"></div><div style="position:absolute;left:497.5px;top:209px;width:1px;height:2.3px;background:#444444;"></div><div style="position:absolute;left:500.0px;top:209px;width:1px;height:2.3px;background:#444444;"></div><div style="position:absolute;left:502.5px;top:209px;width:1px;height:2.3px;background:#444444;"></div><div style="position:absolute;left:504.5px;top:209px;width:1px;height:2.3px;background:#444444;"></div><div style="position:absolute;left:507.0px;top:209px;width:1px;height:2.3px;background:#444444;"></div><div style="position:absolute;left:509.5px;top:209px;width:1px;height:2.3px;background:#444444;"></div><div style="position:absolute;left:512.0px;top:209px;width:1px;height:2.3px;background:#444444;"></div><div style="position:absolute;left:514.0px;top:209px;width:1px;height:2.3px;background:#444444;"></div><div style="position:absolute;left:516.5px;top:209px;width:1px;height:2.3px;background:#444444;"></div><div style="position:absolute;left:519.0px;top:209px;width:1px;height:2.3px;background:#444444;"></div><div style="position:absolute;left:521.5px;top:209px;width:1px;height:2.3px;background:#444444;"></div><div style="position:absolute;left:523.5px;top:209px;width:1px;height:2.3px;background:#444444;"></div><div style="position:absolute;left:526.0px;top:209px;width:1px;height:2.3px;background:#444444;"></div><div style="position:absolute;left:528.5px;top:209px;width:1px;height:2.3px;background:#444444;"></div><div style="position:absolute;left:530.8px;top:205.8px;width:1.1px;height:5.5px;background:#4c4c4c;"></div><div style="position:absolute;left:533.0px;top:209px;width:1px;height:2.3px;background:#444444;"></div><div style="position:absolute;left:535.5px;top:209px;width:1px;height:2.3px;background:#444444;"></div><div style="position:absolute;left:538.0px;top:209px;width:1px;height:2.3px;background:#444444;"></div><div style="position:absolute;left:540.5px;top:209px;width:1px;height:2.3px;background:#444444;"></div><div style="position:absolute;left:542.5px;top:209px;width:1px;height:2.3px;background:#444444;"></div><div style="position:absolute;left:545.0px;top:209px;width:1px;height:2.3px;background:#444444;"></div><div style="position:absolute;left:547.5px;top:209px;width:1px;height:2.3px;background:#444444;"></div><div style="position:absolute;left:550.0px;top:209px;width:1px;height:2.3px;background:#444444;"></div><div style="position:absolute;left:552.0px;top:209px;width:1px;height:2.3px;background:#444444;"></div><div style="position:absolute;left:554.5px;top:209px;width:1px;height:2.3px;background:#444444;"></div><div style="position:absolute;left:557.0px;top:209px;width:1px;height:2.3px;background:#444444;"></div><div style="position:absolute;left:559.5px;top:209px;width:1px;height:2.3px;background:#444444;"></div><div style="position:absolute;left:561.5px;top:209px;width:1px;height:2.3px;background:#444444;"></div><div style="position:absolute;left:564.0px;top:209px;width:1px;height:2.3px;background:#444444;"></div><div style="position:absolute;left:566.5px;top:209px;width:1px;height:2.3px;background:#444444;"></div><div style="position:absolute;left:569.0px;top:209px;width:1px;height:2.3px;background:#444444;"></div><div style="position:absolute;left:571.0px;top:209px;width:1px;height:2.3px;background:#444444;"></div><div style="position:absolute;left:573.5px;top:209px;width:1px;height:2.3px;background:#444444;"></div><div style="position:absolute;left:576.0px;top:209px;width:1px;height:2.3px;background:#444444;"></div><div style="position:absolute;left:578.5px;top:209px;width:1px;height:2.3px;background:#444444;"></div><div style="position:absolute;left:580.5px;top:209px;width:1px;height:2.3px;background:#444444;"></div><div style="position:absolute;left:583.0px;top:209px;width:1px;height:2.3px;background:#444444;"></div><div style="position:absolute;left:585.5px;top:209px;width:1px;height:2.3px;background:#444444;"></div><div style="position:absolute;left:587.8px;top:205.8px;width:1.1px;height:5.5px;background:#4c4c4c;"></div><div style="position:absolute;left:590.0px;top:209px;width:1px;height:2.3px;background:#444444;"></div><div style="position:absolute;left:592.5px;top:209px;width:1px;height:2.3px;background:#444444;"></div><div style="position:absolute;left:595.0px;top:209px;width:1px;height:2.3px;background:#444444;"></div><div style="position:absolute;left:597.5px;top:209px;width:1px;height:2.3px;background:#444444;"></div><div style="position:absolute;left:599.5px;top:209px;width:1px;height:2.3px;background:#444444;"></div><div style="position:absolute;left:602.0px;top:209px;width:1px;height:2.3px;background:#444444;"></div><div style="position:absolute;left:604.5px;top:209px;width:1px;height:2.3px;background:#444444;"></div><div style="position:absolute;left:607.0px;top:209px;width:1px;height:2.3px;background:#444444;"></div><div style="position:absolute;left:609.0px;top:209px;width:1px;height:2.3px;background:#444444;"></div><div style="position:absolute;left:611.5px;top:209px;width:1px;height:2.3px;background:#444444;"></div><div style="position:absolute;left:614.0px;top:209px;width:1px;height:2.3px;background:#444444;"></div><div style="position:absolute;left:616.5px;top:209px;width:1px;height:2.3px;background:#444444;"></div><div style="position:absolute;left:618.5px;top:209px;width:1px;height:2.3px;background:#444444;"></div><div style="position:absolute;left:621.0px;top:209px;width:1px;height:2.3px;background:#444444;"></div><div style="position:absolute;left:623.5px;top:209px;width:1px;height:2.3px;background:#444444;"></div><div style="position:absolute;left:626.0px;top:209px;width:1px;height:2.3px;background:#444444;"></div><div style="position:absolute;left:628.0px;top:209px;width:1px;height:2.3px;background:#444444;"></div><div style="position:absolute;left:630.5px;top:209px;width:1px;height:2.3px;background:#444444;"></div><div style="position:absolute;left:633.0px;top:209px;width:1px;height:2.3px;background:#444444;"></div><div style="position:absolute;left:635.5px;top:209px;width:1px;height:2.3px;background:#444444;"></div><div style="position:absolute;left:637.5px;top:209px;width:1px;height:2.3px;background:#444444;"></div><div style="position:absolute;left:640.0px;top:209px;width:1px;height:2.3px;background:#444444;"></div><div style="position:absolute;left:642.5px;top:209px;width:1px;height:2.3px;background:#444444;"></div><div style="position:absolute;left:644.8px;top:205.8px;width:1.1px;height:5.5px;background:#4c4c4c;"></div><div style="position:absolute;left:647.0px;top:209px;width:1px;height:2.3px;background:#444444;"></div><div style="position:absolute;left:649.5px;top:209px;width:1px;height:2.3px;background:#444444;"></div><div style="position:absolute;left:652.0px;top:209px;width:1px;height:2.3px;background:#444444;"></div><div style="position:absolute;left:654.5px;top:209px;width:1px;height:2.3px;background:#444444;"></div><div style="position:absolute;left:656.5px;top:209px;width:1px;height:2.3px;background:#444444;"></div><div style="position:absolute;left:659.0px;top:209px;width:1px;height:2.3px;background:#444444;"></div><div style="position:absolute;left:661.5px;top:209px;width:1px;height:2.3px;background:#444444;"></div><div style="position:absolute;left:664.0px;top:209px;width:1px;height:2.3px;background:#444444;"></div><div style="position:absolute;left:666.0px;top:209px;width:1px;height:2.3px;background:#444444;"></div><div style="position:absolute;left:668.5px;top:209px;width:1px;height:2.3px;background:#444444;"></div><div style="position:absolute;left:671.0px;top:209px;width:1px;height:2.3px;background:#444444;"></div><div style="position:absolute;left:673.5px;top:209px;width:1px;height:2.3px;background:#444444;"></div><div style="position:absolute;left:675.5px;top:209px;width:1px;height:2.3px;background:#444444;"></div><div style="position:absolute;left:678.0px;top:209px;width:1px;height:2.3px;background:#444444;"></div><div style="position:absolute;left:680.5px;top:209px;width:1px;height:2.3px;background:#444444;"></div><div style="position:absolute;left:683.0px;top:209px;width:1px;height:2.3px;background:#444444;"></div><div style="position:absolute;left:685.0px;top:209px;width:1px;height:2.3px;background:#444444;"></div><div style="position:absolute;left:687.5px;top:209px;width:1px;height:2.3px;background:#444444;"></div><div style="position:absolute;left:690.0px;top:209px;width:1px;height:2.3px;background:#444444;"></div><div style="position:absolute;left:692.5px;top:209px;width:1px;height:2.3px;background:#444444;"></div><div style="position:absolute;left:694.5px;top:209px;width:1px;height:2.3px;background:#444444;"></div><div style="position:absolute;left:697.0px;top:209px;width:1px;height:2.3px;background:#444444;"></div><div style="position:absolute;left:699.5px;top:209px;width:1px;height:2.3px;background:#444444;"></div><div style="position:absolute;left:701.8px;top:205.8px;width:1.1px;height:5.5px;background:#4c4c4c;"></div><div style="position:absolute;left:704.0px;top:209px;width:1px;height:2.3px;background:#444444;"></div><div style="position:absolute;left:706.5px;top:209px;width:1px;height:2.3px;background:#444444;"></div><div style="position:absolute;left:709.0px;top:209px;width:1px;height:2.3px;background:#444444;"></div><div style="position:absolute;left:711.5px;top:209px;width:1px;height:2.3px;background:#444444;"></div><div style="position:absolute;left:713.5px;top:209px;width:1px;height:2.3px;background:#444444;"></div><div style="position:absolute;left:716.0px;top:209px;width:1px;height:2.3px;background:#444444;"></div><div style="position:absolute;left:718.5px;top:209px;width:1px;height:2.3px;background:#444444;"></div><div style="position:absolute;left:721.0px;top:209px;width:1px;height:2.3px;background:#444444;"></div><div style="position:absolute;left:723.0px;top:209px;width:1px;height:2.3px;background:#444444;"></div><div style="position:absolute;left:725.5px;top:209px;width:1px;height:2.3px;background:#444444;"></div><div style="position:absolute;left:728.0px;top:209px;width:1px;height:2.3px;background:#444444;"></div><div style="position:absolute;left:730.5px;top:209px;width:1px;height:2.3px;background:#444444;"></div><div style="position:absolute;left:732.5px;top:209px;width:1px;height:2.3px;background:#444444;"></div><div style="position:absolute;left:735.0px;top:209px;width:1px;height:2.3px;background:#444444;"></div><div style="position:absolute;left:737.5px;top:209px;width:1px;height:2.3px;background:#444444;"></div><div style="position:absolute;left:740.0px;top:209px;width:1px;height:2.3px;background:#444444;"></div><div style="position:absolute;left:742.0px;top:209px;width:1px;height:2.3px;background:#444444;"></div><div style="position:absolute;left:744.5px;top:209px;width:1px;height:2.3px;background:#444444;"></div><div style="position:absolute;left:747.0px;top:209px;width:1px;height:2.3px;background:#444444;"></div><div style="position:absolute;left:749.5px;top:209px;width:1px;height:2.3px;background:#444444;"></div><div style="position:absolute;left:751.5px;top:209px;width:1px;height:2.3px;background:#444444;"></div><div style="position:absolute;left:754.0px;top:209px;width:1px;height:2.3px;background:#444444;"></div><div style="position:absolute;left:427px;top:211.3px;width:328px;height:5px;background:#393939;"></div><div style="position:absolute;left:0px;top:235px;width:108.2px;height:165px;background:#232323;"></div><div style="position:absolute;left:112px;top:235px;width:34.5px;height:165px;background:#232323;"></div><div style="position:absolute;left:146.2px;top:235px;width:1px;height:165px;background:#141a24;"></div><div style="position:absolute;left:146.2px;top:235px;width:608.8px;height:0.8px;background:#141a24;"></div><div style="position:absolute;left:147px;top:235.6px;width:608px;height:164.4px;background:#232323;border:1.2px solid #6580a4;border-right:none;border-bottom:none;border-top-left-radius:1.5px;box-sizing:border-box"></div><svg style="position:absolute;left:87.7px;top:222.7px;" width="5.6" height="5.2" viewBox="0 0 5.6 5.2"><path d="M0.3,0.9 Q0.3,0.2 1,0.2 H4.6 Q5.3,0.2 5.3,0.9 V2.9 L2.8,5 L0.3,2.9 Z" fill="#ececec"/></svg><svg style="position:absolute;left:106.4px;top:222px;" width="3" height="6" viewBox="0 0 3 6"><path d="M2.6,0 C1.4,0 1.3,0.6 1.3,1.6 V2.3 C1.3,2.8 1,3 0.4,3 C1,3 1.3,3.2 1.3,3.7 V4.4 C1.3,5.4 1.4,6 2.6,6" stroke="#ececec" stroke-width="1.1" fill="none"/></svg><svg style="position:absolute;left:120.69999999999999px;top:222px;" width="3" height="6" viewBox="0 0 3 6"><path d="M2.6,0 C1.4,0 1.3,0.6 1.3,1.6 V2.3 C1.3,2.8 1,3 0.4,3 C1,3 1.3,3.2 1.3,3.7 V4.4 C1.3,5.4 1.4,6 2.6,6" stroke="#ececec" stroke-width="1.1" fill="none" transform="translate(3,0) scale(-1,1)"/></svg><svg style="position:absolute;left:138.8px;top:222px;" width="8" height="6" viewBox="0 0 8 6"><path d="M2,0.2 C1.2,0.2 1.1,0.7 1.1,1.5 V2.3 C1.1,2.8 0.8,3 0.3,3 C0.8,3 1.1,3.2 1.1,3.7 V4.5 C1.1,5.3 1.2,5.8 2,5.8" stroke="#ececec" stroke-width="0.8" fill="none"/><path d="M2.6,3 L4.6,1.2 V2.3 H7.6 V3.7 H4.6 V4.8 Z" fill="#ececec"/></svg><svg style="position:absolute;left:155.3px;top:222.8px;" width="6" height="4.6" viewBox="0 0 6 4.6"><path d="M0.2,2.3 L3.6,0.1 V4.5 Z" fill="#ececec"/><rect x="4.1" y="0.2" width="1.5" height="4.2" fill="#ececec"/></svg><svg style="position:absolute;left:170.8px;top:222.2px;" width="6" height="5.4" viewBox="0 0 6 5.4"><path d="M0.3,0.2 L5.8,2.7 L0.3,5.2 Z" fill="#ececec"/></svg><svg style="position:absolute;left:186.6px;top:222.8px;" width="6" height="4.6" viewBox="0 0 6 4.6"><rect x="0.3" y="0.2" width="1.5" height="4.2" fill="#ececec"/><path d="M2.4,0.1 L5.8,2.3 L2.4,4.5 Z" fill="#ececec"/></svg><svg style="position:absolute;left:201.89999999999998px;top:222px;" width="8" height="6" viewBox="0 0 8 6"><path d="M0.4,2.3 H3.4 V1.2 L5.4,3 L3.4,4.8 V3.7 H0.4 Z" fill="#ececec"/><path d="M6,0.2 C6.8,0.2 6.9,0.7 6.9,1.5 V2.3 C6.9,2.8 7.2,3 7.7,3 C7.2,3 6.9,3.2 6.9,3.7 V4.5 C6.9,5.3 6.8,5.8 6,5.8" stroke="#ececec" stroke-width="0.8" fill="none"/></svg><svg style="position:absolute;left:220.10000000000002px;top:221.2px;" width="10" height="7" viewBox="0 0 10 7"><rect x="0.8" y="3.1" width="3.3" height="3.1" rx="0.4" fill="#ececec"/><rect x="5.7" y="3.1" width="3.6" height="3.2" rx="1.3" fill="#ececec"/><path d="M3.6,0.3 H6.4 V1.6 H7.2 L5,3.2 L2.8,1.6 H3.6 Z" fill="#8a8a8a"/></svg><svg style="position:absolute;left:236.2px;top:221.2px;" width="10" height="7" viewBox="0 0 10 7"><path d="M0.3,6.2 V4.4 Q0.3,3.4 1.3,3.4 H8.7 Q9.7,3.4 9.7,4.4 V6.2 Z" fill="#ececec"/><rect x="3.2" y="0.5" width="3.6" height="2.9" fill="#8f8f8f"/></svg><svg style="position:absolute;left:253.10000000000002px;top:222.2px;" width="8" height="5.6" viewBox="0 0 8 5.6"><path d="M0.3,5.3 V2 L1.8,0.5 H6.2 L7.7,2 V5.3 Z" fill="#ececec"/><circle cx="4" cy="3.2" r="1.1" fill="#7a7a7a"/></svg><svg style="position:absolute;left:558.9px;top:222.7px;" width="5.6" height="5.2" viewBox="0 0 5.6 5.2"><path d="M0.3,0.9 Q0.3,0.2 1,0.2 H4.6 Q5.3,0.2 5.3,0.9 V2.9 L2.8,5 L0.3,2.9 Z" fill="#ececec"/></svg><svg style="position:absolute;left:577.6px;top:222px;" width="3" height="6" viewBox="0 0 3 6"><path d="M2.6,0 C1.4,0 1.3,0.6 1.3,1.6 V2.3 C1.3,2.8 1,3 0.4,3 C1,3 1.3,3.2 1.3,3.7 V4.4 C1.3,5.4 1.4,6 2.6,6" stroke="#ececec" stroke-width="1.1" fill="none"/></svg><svg style="position:absolute;left:591.9px;top:222px;" width="3" height="6" viewBox="0 0 3 6"><path d="M2.6,0 C1.4,0 1.3,0.6 1.3,1.6 V2.3 C1.3,2.8 1,3 0.4,3 C1,3 1.3,3.2 1.3,3.7 V4.4 C1.3,5.4 1.4,6 2.6,6" stroke="#ececec" stroke-width="1.1" fill="none" transform="translate(3,0) scale(-1,1)"/></svg><svg style="position:absolute;left:610.0px;top:222px;" width="8" height="6" viewBox="0 0 8 6"><path d="M2,0.2 C1.2,0.2 1.1,0.7 1.1,1.5 V2.3 C1.1,2.8 0.8,3 0.3,3 C0.8,3 1.1,3.2 1.1,3.7 V4.5 C1.1,5.3 1.2,5.8 2,5.8" stroke="#ececec" stroke-width="0.8" fill="none"/><path d="M2.6,3 L4.6,1.2 V2.3 H7.6 V3.7 H4.6 V4.8 Z" fill="#ececec"/></svg><svg style="position:absolute;left:626.5px;top:222.8px;" width="6" height="4.6" viewBox="0 0 6 4.6"><path d="M0.2,2.3 L3.6,0.1 V4.5 Z" fill="#ececec"/><rect x="4.1" y="0.2" width="1.5" height="4.2" fill="#ececec"/></svg><svg style="position:absolute;left:642.0px;top:222.2px;" width="6" height="5.4" viewBox="0 0 6 5.4"><path d="M0.3,0.2 L5.8,2.7 L0.3,5.2 Z" fill="#ececec"/></svg><svg style="position:absolute;left:657.8px;top:222.8px;" width="6" height="4.6" viewBox="0 0 6 4.6"><rect x="0.3" y="0.2" width="1.5" height="4.2" fill="#ececec"/><path d="M2.4,0.1 L5.8,2.3 L2.4,4.5 Z" fill="#ececec"/></svg><svg style="position:absolute;left:673.1px;top:222px;" width="8" height="6" viewBox="0 0 8 6"><path d="M0.4,2.3 H3.4 V1.2 L5.4,3 L3.4,4.8 V3.7 H0.4 Z" fill="#ececec"/><path d="M6,0.2 C6.8,0.2 6.9,0.7 6.9,1.5 V2.3 C6.9,2.8 7.2,3 7.7,3 C7.2,3 6.9,3.2 6.9,3.7 V4.5 C6.9,5.3 6.8,5.8 6,5.8" stroke="#ececec" stroke-width="0.8" fill="none"/></svg><svg style="position:absolute;left:690.8px;top:221px;" width="10" height="7" viewBox="0 0 10 7"><path d="M3.4,2.2 L5,0.4 L6.6,2.2 Z" fill="#9a9a9a"/><path d="M0.5,6.4 V5 A2.1,2.1 0 0 1 4.7,5 V6.4 Z" fill="#ececec"/><path d="M5.3,6.4 V5 A2.1,2.1 0 0 1 9.5,5 V6.4 Z" fill="#ececec"/></svg><svg style="position:absolute;left:707.1px;top:221px;" width="10" height="7" viewBox="0 0 10 7"><path d="M3.4,2.2 L5,0.4 L6.6,2.2 Z" fill="#8a8a8a"/><path d="M0.5,6.4 V5 A2.1,2.1 0 0 1 4.7,5 V6.4 Z" fill="#ececec"/><path d="M5.3,6.4 V5 A2.1,2.1 0 0 1 9.5,5 V6.4 Z" fill="#ececec"/></svg><svg style="position:absolute;left:724.3px;top:222.2px;" width="8" height="5.6" viewBox="0 0 8 5.6"><path d="M0.3,5.3 V2 L1.8,0.5 H6.2 L7.7,2 V5.3 Z" fill="#ececec"/><circle cx="4" cy="3.2" r="1.1" fill="#7a7a7a"/></svg><svg style="position:absolute;left:739.4px;top:221.5px;" width="10" height="7.2" viewBox="0 0 10 7.2"><rect x="0.4" y="0.3" width="5.4" height="4.6" fill="#ececec"/><path d="M1.2,1.6 H5 M1.2,3.2 H5" stroke="#555" stroke-width="0.6"/><circle cx="7" cy="4.6" r="2.1" fill="#262626" stroke="#ececec" stroke-width="1"/></svg><div style="position:absolute;left:160px;top:192.4px;width:5.6px;height:5.8px;background:#666666;"></div><svg style="position:absolute;left:170px;top:193.5px;" width="8" height="4" viewBox="0 0 8 4"><path d="M0.3,2 L2.2,0.4 V3.6 Z M7.7,2 L5.8,0.4 V3.6 Z" fill="#ececec"/><rect x="2.4" y="1.2" width="3.2" height="1.6" fill="#ececec"/></svg><div style="position:absolute;left:466.8px;top:192.6px;width:28.4px;height:6.8px;background:#1d1d1d;border-radius:1px"></div><div style="position:absolute;left:468.6px;top:194px;font-size:5px;line-height:5px;color:#e8e8e8;white-space:nowrap;-webkit-text-stroke:0.25px #e8e8e8;">Fit</div><svg style="position:absolute;left:489.8px;top:194.6px;" width="4" height="3" viewBox="0 0 4 3"><path d="M0.4,0.4 L2,2.2 L3.6,0.4" stroke="#cfcfcf" stroke-width="0.8" fill="none"/></svg><svg style="position:absolute;left:0px;top:240.5px;" width="4.5" height="4.5" viewBox="0 0 4.5 4.5"><rect x="0" y="0.3" width="4.2" height="0.8" fill="#bbb"/><rect x="0" y="1.8" width="4.2" height="0.8" fill="#bbb"/><rect x="0" y="3.3" width="4.2" height="0.8" fill="#bbb"/></svg><div style="position:absolute;left:0px;top:247px;width:4.2px;height:1px;background:#d8d8d8;"></div><div style="position:absolute;left:14.2px;top:241px;font-size:5px;line-height:5px;color:#e6e6e6;white-space:nowrap;-webkit-text-stroke:0.25px #e6e6e6;">Media Browser</div><div style="position:absolute;left:-0.6px;top:255px;font-size:5px;line-height:5px;color:#dcdcdc;white-space:nowrap;-webkit-text-stroke:0.25px #dcdcdc;">roj</div><div style="position:absolute;left:0px;top:263.8px;width:36.3px;height:8.5px;background:#171717;"></div><svg style="position:absolute;left:44px;top:265.6px;" width="7.2" height="5.2" viewBox="0 0 7.2 5.2"><path d="M0.2,0.2 H2.8 L3.4,1 H7 V5 H0.2 Z" fill="#d8d8d8"/><rect x="1" y="2" width="5.2" height="0.6" fill="#777"/></svg><div style="position:absolute;left:59.8px;top:267px;font-size:5px;line-height:5px;color:#e0e0e0;white-space:nowrap;-webkit-text-stroke:0.25px #e0e0e0;">1 of 2 items selected</div><div style="position:absolute;left:0px;top:279px;width:104px;height:8.5px;background:#262626;"></div><div style="position:absolute;left:50.6px;top:281px;font-size:5px;line-height:5px;color:#c8c8c8;white-space:nowrap;-webkit-text-stroke:0.25px #c8c8c8;">Frame Rate</div><svg style="position:absolute;left:78.6px;top:281.8px;" width="6" height="3.5" viewBox="0 0 6 3.5"><path d="M0.5,3 L3,0.6 L5.5,3" stroke="#cfcfcf" stroke-width="0.9" fill="none"/></svg><div style="position:absolute;left:96.2px;top:281px;font-size:5px;line-height:5px;color:#c8c8c8;white-space:nowrap;-webkit-text-stroke:0.25px #c8c8c8;">Me</div><div style="position:absolute;left:0px;top:288px;width:104px;height:10.5px;background:#1e1e1e;"></div><div style="position:absolute;left:-1.8px;top:291px;font-size:5px;line-height:5px;color:#dedede;white-space:nowrap;-webkit-text-stroke:0.25px #dedede;">010_Tr1</div><div style="position:absolute;left:50.8px;top:291px;font-size:5px;line-height:5px;color:#dedede;white-space:nowrap;-webkit-text-stroke:0.25px #dedede;">29.97 fps</div><div style="position:absolute;left:96.8px;top:291px;font-size:5px;line-height:5px;color:#dedede;white-space:nowrap;-webkit-text-stroke:0.25px #dedede;">00,</div><div style="position:absolute;left:0px;top:298.5px;width:104px;height:10.4px;background:#4a4a4a;"></div><div style="position:absolute;left:-2.2px;top:302px;font-size:5px;line-height:5px;color:#e8e8e8;white-space:nowrap;-webkit-text-stroke:0.25px #e8e8e8;">010_Tr1.WAV</div><div style="position:absolute;left:51px;top:302px;font-size:5px;line-height:5px;color:#e8e8e8;white-space:nowrap;-webkit-text-stroke:0.25px #e8e8e8;">48000 Hz</div><div style="position:absolute;left:97.4px;top:302px;font-size:5px;line-height:5px;color:#e8e8e8;white-space:nowrap;-webkit-text-stroke:0.25px #e8e8e8;">14</div><div style="position:absolute;left:104.4px;top:279px;width:3.8px;height:121px;background:#292929;"></div><div style="position:absolute;left:117.6px;top:244.8px;width:10.6px;height:10.2px;background:#141414;"></div><svg style="position:absolute;left:119.6px;top:245.6px;" width="7" height="9" viewBox="0 0 7 9"><path d="M0.8,0.6 L6.4,5.6 L3.9,5.8 L2.2,8.4 Z" fill="#5fa6ee"/></svg><svg style="position:absolute;left:131px;top:246.3px;" width="10" height="5.6" viewBox="0 0 10 5.6"><path d="M0.4,0.6 H5 M0.4,0.6 V4.9 H5" stroke="#ececec" stroke-width="0.8" fill="none"/><path d="M2.4,1.7 H6.6 V0.4 L9.5,2.75 L6.6,5.1 V3.8 H2.4 Z" fill="#ececec"/></svg><div style="position:absolute;left:140.5px;top:253.3px;width:1px;height:1px;background:#a8a8a8;"></div><div style="position:absolute;left:127.3px;top:265.8px;width:1px;height:1px;background:#a8a8a8;"></div><div style="position:absolute;left:140.5px;top:265.8px;width:1px;height:1px;background:#a8a8a8;"></div><div style="position:absolute;left:127.3px;top:278.2px;width:1px;height:1px;background:#a8a8a8;"></div><div style="position:absolute;left:140.5px;top:278.2px;width:1px;height:1px;background:#a8a8a8;"></div><div style="position:absolute;left:127.3px;top:290.6px;width:1px;height:1px;background:#a8a8a8;"></div><div style="position:absolute;left:140.5px;top:290.6px;width:1px;height:1px;background:#a8a8a8;"></div><svg style="position:absolute;left:118.8px;top:258px;" width="8" height="6.6" viewBox="0 0 8 6.6"><path d="M0.3,1.5 H3 M5,1.5 H7.7 M0.3,5 H3 M5,5 H7.7" stroke="#ececec" stroke-width="1.1"/><rect x="3" y="0" width="1" height="6.6" fill="#ececec"/><rect x="4.1" y="0" width="1" height="6.6" fill="#ececec"/></svg><svg style="position:absolute;left:131.8px;top:256.8px;" width="9" height="9.6" viewBox="0 0 9 9.6"><path d="M1.6,0.6 L8.4,6.6 L6.6,8.8 L0.4,2.8 Z" fill="#ececec"/><path d="M2.6,4.2 L4.2,2.4 M4.6,6 L6.2,4.2" stroke="#2a2a2a" stroke-width="0.8"/></svg><svg style="position:absolute;left:118.2px;top:270.8px;" width="10" height="6.6" viewBox="0 0 10 6.6"><path d="M0.6,0.4 V6.2 M9.4,0.4 V6.2" stroke="#ececec" stroke-width="0.9" fill="none"/><path d="M2,3.3 H8 M3.2,2 L2,3.3 L3.2,4.6 M6.8,2 L8,3.3 L6.8,4.6" stroke="#ececec" stroke-width="0.9" fill="none"/></svg><svg style="position:absolute;left:132px;top:269.8px;" width="8.5" height="8.6" viewBox="0 0 8.5 8.6"><path d="M0.6,8 L1.2,5.2 L5.6,0.8 L7.8,3 L3.4,7.4 Z" fill="#ececec"/><circle cx="2.6" cy="6" r="0.6" fill="#232323"/></svg><svg style="position:absolute;left:118.6px;top:282.8px;" width="9" height="8.2" viewBox="0 0 9 8.2"><path d="M0.8,4.4 C1,3.4 2,3.4 2.4,4.2 V1.6 C2.4,0.8 3.5,0.8 3.5,1.6 V3.4 V0.9 C3.5,0.2 4.7,0.2 4.7,0.9 V3.4 V1.3 C4.7,0.6 5.9,0.6 5.9,1.3 V3.6 V2.3 C5.9,1.7 7.1,1.7 7.1,2.3 V5 C7.1,7 6.1,7.9 4.3,7.9 C2.9,7.9 2.3,7.2 1.6,6.2 Z" fill="#ececec"/><path d="M3.5,3 V5 M4.7,3 V5" stroke="#555" stroke-width="0.4"/></svg><svg style="position:absolute;left:131.2px;top:282.6px;" width="8.4" height="8.8" viewBox="0 0 8.4 8.8"><path d="M0.4,0.4 H8 V2.6 H7.4 C7.2,1.6 6.8,1.3 5.9,1.3 H4.9 V7.4 C4.9,7.9 5.2,8 6,8 V8.5 H2.4 V8 C3.2,8 3.5,7.9 3.5,7.4 V1.3 H2.5 C1.6,1.3 1.2,1.6 1,2.6 H0.4 Z" fill="#ececec"/></svg><div style="position:absolute;left:152.2px;top:241px;font-size:5px;line-height:5px;color:#aaaaaa;white-space:nowrap;-webkit-text-stroke:0.25px #aaaaaa;">×</div><div style="position:absolute;left:159px;top:242px;font-size:4.95px;line-height:4.95px;color:#f2f2f2;white-space:nowrap;-webkit-text-stroke:0.3px #f2f2f2;letter-spacing:0.02px">ZOOM0010_Tr1</div><svg style="position:absolute;left:199.6px;top:241.6px;" width="4" height="4.5" viewBox="0 0 4 4.5"><rect x="0" y="0.2" width="3.6" height="0.7" fill="#8a8a8a"/><rect x="0" y="1.7" width="3.6" height="0.7" fill="#8a8a8a"/><rect x="0" y="3.2" width="3.6" height="0.7" fill="#8a8a8a"/></svg><div style="position:absolute;left:156.2px;top:251px;font-size:8px;line-height:8px;color:#5aaaf4;white-space:nowrap;font-weight:bold;letter-spacing:-0.15px">00;00;00;00</div><svg style="position:absolute;left:157px;top:261.2px;" width="7" height="6.8" viewBox="0 0 7 6.8"><path d="M3.6,0.4 C4.6,0.4 4.8,1.6 4.2,2.2 L5.8,2.6 C6.6,3 6.2,4.2 5.4,4 L4,3.6 L3.8,5.6 C3.7,6.6 2.4,6.6 2.4,5.6 L2.6,3.8 L1.2,4.6 C0.4,5 -0.1,4 0.6,3.5 L2.6,2.3 C2.2,1.4 2.6,0.4 3.6,0.4 Z" fill="#5d9fe6"/><circle cx="3.4" cy="2.6" r="0.9" fill="#b8d8f6"/></svg><svg style="position:absolute;left:172.8px;top:261.8px;" width="7" height="6.2" viewBox="0 0 7 6.2"><path d="M1.2,6 V3.1 C1.2,1.5 2.2,0.6 3.5,0.6 C4.8,0.6 5.8,1.5 5.8,3.1 V6" stroke="#6aaaf0" stroke-width="1.7" fill="none"/><path d="M0.4,5.9 H2 M5,5.9 H6.6" stroke="#cfe4f8" stroke-width="0.8"/></svg><svg style="position:absolute;left:188px;top:261.6px;" width="7.2" height="6.8" viewBox="0 0 7.2 6.8"><rect x="3.2" y="0.4" width="3.6" height="3.6" rx="0.5" fill="#6eb0f0"/><rect x="0.4" y="2.8" width="3.6" height="3.6" rx="0.5" fill="#5a9de4"/><rect x="1.2" y="3.6" width="1.4" height="1.4" fill="#cfe4f8"/><rect x="4.4" y="1.2" width="1.4" height="1.4" fill="#cfe4f8"/></svg><svg style="position:absolute;left:204.3px;top:262.8px;" width="5.6" height="5.2" viewBox="0 0 5.6 5.2"><path d="M0.3,0.3 H5.3 V2.8 L2.8,4.9 L0.3,2.8 Z" fill="#ececec"/></svg><svg style="position:absolute;left:219.2px;top:261.3px;" width="7.5" height="7.2" viewBox="0 0 7.5 7.2"><path d="M1,1.4 C1,3 2.4,3.6 3.6,3.1 L6.4,6.6 M1.2,0.6 L2.2,1.8 L3.2,0.6 C4.2,1.5 4.2,2.7 3.6,3.1" stroke="#ececec" stroke-width="1.1" fill="none" stroke-linecap="round"/></svg><div style="position:absolute;left:255px;top:255px;width:500px;height:10px;overflow:hidden"><div style="position:absolute;left:-12.650000000000006px;top:4px;font-size:4.95px;line-height:4.95px;color:#d8d8d8;white-space:nowrap;-webkit-text-stroke:0.12px #d8d8d8;">00;00;00;00</div><div style="position:absolute;left:31.19999999999999px;top:4px;font-size:4.95px;line-height:4.95px;color:#d8d8d8;white-space:nowrap;-webkit-text-stroke:0.12px #d8d8d8;">00;00;01;00</div><div style="position:absolute;left:75.05000000000001px;top:4px;font-size:4.95px;line-height:4.95px;color:#d8d8d8;white-space:nowrap;-webkit-text-stroke:0.12px #d8d8d8;">00;00;02;00</div><div style="position:absolute;left:118.89999999999998px;top:4px;font-size:4.95px;line-height:4.95px;color:#d8d8d8;white-space:nowrap;-webkit-text-stroke:0.12px #d8d8d8;">00;00;03;00</div><div style="position:absolute;left:162.75px;top:4px;font-size:4.95px;line-height:4.95px;color:#d8d8d8;white-space:nowrap;-webkit-text-stroke:0.12px #d8d8d8;">00;00;04;00</div><div style="position:absolute;left:206.60000000000002px;top:4px;font-size:4.95px;line-height:4.95px;color:#d8d8d8;white-space:nowrap;-webkit-text-stroke:0.12px #d8d8d8;">00;00;05;00</div><div style="position:absolute;left:250.45000000000005px;top:4px;font-size:4.95px;line-height:4.95px;color:#d8d8d8;white-space:nowrap;-webkit-text-stroke:0.12px #d8d8d8;">00;00;06;00</div><div style="position:absolute;left:294.29999999999995px;top:4px;font-size:4.95px;line-height:4.95px;color:#d8d8d8;white-space:nowrap;-webkit-text-stroke:0.12px #d8d8d8;">00;00;07;00</div><div style="position:absolute;left:338.15px;top:4px;font-size:4.95px;line-height:4.95px;color:#d8d8d8;white-space:nowrap;-webkit-text-stroke:0.12px #d8d8d8;">00;00;08;00</div><div style="position:absolute;left:382.0px;top:4px;font-size:4.95px;line-height:4.95px;color:#d8d8d8;white-space:nowrap;-webkit-text-stroke:0.12px #d8d8d8;">00;00;09;00</div><div style="position:absolute;left:425.85px;top:4px;font-size:4.95px;line-height:4.95px;color:#d8d8d8;white-space:nowrap;-webkit-text-stroke:0.12px #d8d8d8;">00;00;10;00</div><div style="position:absolute;left:469.70000000000005px;top:4px;font-size:4.95px;line-height:4.95px;color:#d8d8d8;white-space:nowrap;-webkit-text-stroke:0.12px #d8d8d8;">00;00;11;00</div></div><div style="position:absolute;left:254.9px;top:264px;width:1px;height:4.3px;background:#6a6a6a;"></div><div style="position:absolute;left:257.5px;top:266px;width:1px;height:2.3px;background:#444444;"></div><div style="position:absolute;left:259.5px;top:266px;width:1px;height:2.3px;background:#444444;"></div><div style="position:absolute;left:262.5px;top:266px;width:1px;height:2.3px;background:#444444;"></div><div style="position:absolute;left:264.5px;top:266px;width:1px;height:2.3px;background:#444444;"></div><div style="position:absolute;left:267.5px;top:266px;width:1px;height:2.3px;background:#444444;"></div><div style="position:absolute;left:269.5px;top:266px;width:1px;height:2.3px;background:#444444;"></div><div style="position:absolute;left:271.5px;top:266px;width:1px;height:2.3px;background:#444444;"></div><div style="position:absolute;left:274.5px;top:266px;width:1px;height:2.3px;background:#444444;"></div><div style="position:absolute;left:276.5px;top:266px;width:1px;height:2.3px;background:#444444;"></div><div style="position:absolute;left:279.5px;top:266px;width:1px;height:2.3px;background:#444444;"></div><div style="position:absolute;left:281.5px;top:266px;width:1px;height:2.3px;background:#444444;"></div><div style="position:absolute;left:284.5px;top:266px;width:1px;height:2.3px;background:#444444;"></div><div style="position:absolute;left:286.5px;top:266px;width:1px;height:2.3px;background:#444444;"></div><div style="position:absolute;left:289.5px;top:266px;width:1px;height:2.3px;background:#444444;"></div><div style="position:absolute;left:291.5px;top:266px;width:1px;height:2.3px;background:#444444;"></div><div style="position:absolute;left:293.5px;top:266px;width:1px;height:2.3px;background:#444444;"></div><div style="position:absolute;left:296.5px;top:266px;width:1px;height:2.3px;background:#444444;"></div><div style="position:absolute;left:298.75px;top:264px;width:1px;height:4.3px;background:#6a6a6a;"></div><div style="position:absolute;left:301.5px;top:266px;width:1px;height:2.3px;background:#444444;"></div><div style="position:absolute;left:303.5px;top:266px;width:1px;height:2.3px;background:#444444;"></div><div style="position:absolute;left:306.5px;top:266px;width:1px;height:2.3px;background:#444444;"></div><div style="position:absolute;left:308.5px;top:266px;width:1px;height:2.3px;background:#444444;"></div><div style="position:absolute;left:310.5px;top:266px;width:1px;height:2.3px;background:#444444;"></div><div style="position:absolute;left:313.5px;top:266px;width:1px;height:2.3px;background:#444444;"></div><div style="position:absolute;left:315.5px;top:266px;width:1px;height:2.3px;background:#444444;"></div><div style="position:absolute;left:318.5px;top:266px;width:1px;height:2.3px;background:#444444;"></div><div style="position:absolute;left:320.5px;top:266px;width:1px;height:2.3px;background:#444444;"></div><div style="position:absolute;left:323.5px;top:266px;width:1px;height:2.3px;background:#444444;"></div><div style="position:absolute;left:325.5px;top:266px;width:1px;height:2.3px;background:#444444;"></div><div style="position:absolute;left:327.5px;top:266px;width:1px;height:2.3px;background:#444444;"></div><div style="position:absolute;left:330.5px;top:266px;width:1px;height:2.3px;background:#444444;"></div><div style="position:absolute;left:332.5px;top:266px;width:1px;height:2.3px;background:#444444;"></div><div style="position:absolute;left:335.5px;top:266px;width:1px;height:2.3px;background:#444444;"></div><div style="position:absolute;left:337.5px;top:266px;width:1px;height:2.3px;background:#444444;"></div><div style="position:absolute;left:340.5px;top:266px;width:1px;height:2.3px;background:#444444;"></div><div style="position:absolute;left:342.6px;top:264px;width:1px;height:4.3px;background:#6a6a6a;"></div><div style="position:absolute;left:345.5px;top:266px;width:1px;height:2.3px;background:#444444;"></div><div style="position:absolute;left:347.5px;top:266px;width:1px;height:2.3px;background:#444444;"></div><div style="position:absolute;left:349.5px;top:266px;width:1px;height:2.3px;background:#444444;"></div><div style="position:absolute;left:352.5px;top:266px;width:1px;height:2.3px;background:#444444;"></div><div style="position:absolute;left:354.5px;top:266px;width:1px;height:2.3px;background:#444444;"></div><div style="position:absolute;left:357.5px;top:266px;width:1px;height:2.3px;background:#444444;"></div><div style="position:absolute;left:359.5px;top:266px;width:1px;height:2.3px;background:#444444;"></div><div style="position:absolute;left:362.5px;top:266px;width:1px;height:2.3px;background:#444444;"></div><div style="position:absolute;left:364.5px;top:266px;width:1px;height:2.3px;background:#444444;"></div><div style="position:absolute;left:366.5px;top:266px;width:1px;height:2.3px;background:#444444;"></div><div style="position:absolute;left:369.5px;top:266px;width:1px;height:2.3px;background:#444444;"></div><div style="position:absolute;left:371.5px;top:266px;width:1px;height:2.3px;background:#444444;"></div><div style="position:absolute;left:374.5px;top:266px;width:1px;height:2.3px;background:#444444;"></div><div style="position:absolute;left:376.5px;top:266px;width:1px;height:2.3px;background:#444444;"></div><div style="position:absolute;left:379.5px;top:266px;width:1px;height:2.3px;background:#444444;"></div><div style="position:absolute;left:381.5px;top:266px;width:1px;height:2.3px;background:#444444;"></div><div style="position:absolute;left:384.5px;top:266px;width:1px;height:2.3px;background:#444444;"></div><div style="position:absolute;left:386.45000000000005px;top:264px;width:1px;height:4.3px;background:#6a6a6a;"></div><div style="position:absolute;left:388.5px;top:266px;width:1px;height:2.3px;background:#444444;"></div><div style="position:absolute;left:391.5px;top:266px;width:1px;height:2.3px;background:#444444;"></div><div style="position:absolute;left:393.5px;top:266px;width:1px;height:2.3px;background:#444444;"></div><div style="position:absolute;left:396.5px;top:266px;width:1px;height:2.3px;background:#444444;"></div><div style="position:absolute;left:398.5px;top:266px;width:1px;height:2.3px;background:#444444;"></div><div style="position:absolute;left:401.5px;top:266px;width:1px;height:2.3px;background:#444444;"></div><div style="position:absolute;left:403.5px;top:266px;width:1px;height:2.3px;background:#444444;"></div><div style="position:absolute;left:405.5px;top:266px;width:1px;height:2.3px;background:#444444;"></div><div style="position:absolute;left:408.5px;top:266px;width:1px;height:2.3px;background:#444444;"></div><div style="position:absolute;left:410.5px;top:266px;width:1px;height:2.3px;background:#444444;"></div><div style="position:absolute;left:413.5px;top:266px;width:1px;height:2.3px;background:#444444;"></div><div style="position:absolute;left:415.5px;top:266px;width:1px;height:2.3px;background:#444444;"></div><div style="position:absolute;left:418.5px;top:266px;width:1px;height:2.3px;background:#444444;"></div><div style="position:absolute;left:420.5px;top:266px;width:1px;height:2.3px;background:#444444;"></div><div style="position:absolute;left:422.5px;top:266px;width:1px;height:2.3px;background:#444444;"></div><div style="position:absolute;left:425.5px;top:266px;width:1px;height:2.3px;background:#444444;"></div><div style="position:absolute;left:427.5px;top:266px;width:1px;height:2.3px;background:#444444;"></div><div style="position:absolute;left:430.3px;top:264px;width:1px;height:4.3px;background:#6a6a6a;"></div><div style="position:absolute;left:432.5px;top:266px;width:1px;height:2.3px;background:#444444;"></div><div style="position:absolute;left:435.5px;top:266px;width:1px;height:2.3px;background:#444444;"></div><div style="position:absolute;left:437.5px;top:266px;width:1px;height:2.3px;background:#444444;"></div><div style="position:absolute;left:440.5px;top:266px;width:1px;height:2.3px;background:#444444;"></div><div style="position:absolute;left:442.5px;top:266px;width:1px;height:2.3px;background:#444444;"></div><div style="position:absolute;left:444.5px;top:266px;width:1px;height:2.3px;background:#444444;"></div><div style="position:absolute;left:447.5px;top:266px;width:1px;height:2.3px;background:#444444;"></div><div style="position:absolute;left:449.5px;top:266px;width:1px;height:2.3px;background:#444444;"></div><div style="position:absolute;left:452.5px;top:266px;width:1px;height:2.3px;background:#444444;"></div><div style="position:absolute;left:454.5px;top:266px;width:1px;height:2.3px;background:#444444;"></div><div style="position:absolute;left:457.5px;top:266px;width:1px;height:2.3px;background:#444444;"></div><div style="position:absolute;left:459.5px;top:266px;width:1px;height:2.3px;background:#444444;"></div><div style="position:absolute;left:461.5px;top:266px;width:1px;height:2.3px;background:#444444;"></div><div style="position:absolute;left:464.5px;top:266px;width:1px;height:2.3px;background:#444444;"></div><div style="position:absolute;left:466.5px;top:266px;width:1px;height:2.3px;background:#444444;"></div><div style="position:absolute;left:469.5px;top:266px;width:1px;height:2.3px;background:#444444;"></div><div style="position:absolute;left:471.5px;top:266px;width:1px;height:2.3px;background:#444444;"></div><div style="position:absolute;left:474.15px;top:264px;width:1px;height:4.3px;background:#6a6a6a;"></div><div style="position:absolute;left:476.5px;top:266px;width:1px;height:2.3px;background:#444444;"></div><div style="position:absolute;left:479.5px;top:266px;width:1px;height:2.3px;background:#444444;"></div><div style="position:absolute;left:481.5px;top:266px;width:1px;height:2.3px;background:#444444;"></div><div style="position:absolute;left:483.5px;top:266px;width:1px;height:2.3px;background:#444444;"></div><div style="position:absolute;left:486.5px;top:266px;width:1px;height:2.3px;background:#444444;"></div><div style="position:absolute;left:488.5px;top:266px;width:1px;height:2.3px;background:#444444;"></div><div style="position:absolute;left:491.5px;top:266px;width:1px;height:2.3px;background:#444444;"></div><div style="position:absolute;left:493.5px;top:266px;width:1px;height:2.3px;background:#444444;"></div><div style="position:absolute;left:496.5px;top:266px;width:1px;height:2.3px;background:#444444;"></div><div style="position:absolute;left:498.5px;top:266px;width:1px;height:2.3px;background:#444444;"></div><div style="position:absolute;left:500.5px;top:266px;width:1px;height:2.3px;background:#444444;"></div><div style="position:absolute;left:503.5px;top:266px;width:1px;height:2.3px;background:#444444;"></div><div style="position:absolute;left:505.5px;top:266px;width:1px;height:2.3px;background:#444444;"></div><div style="position:absolute;left:508.5px;top:266px;width:1px;height:2.3px;background:#444444;"></div><div style="position:absolute;left:510.5px;top:266px;width:1px;height:2.3px;background:#444444;"></div><div style="position:absolute;left:513.5px;top:266px;width:1px;height:2.3px;background:#444444;"></div><div style="position:absolute;left:515.5px;top:266px;width:1px;height:2.3px;background:#444444;"></div><div style="position:absolute;left:518.0px;top:264px;width:1px;height:4.3px;background:#6a6a6a;"></div><div style="position:absolute;left:520.5px;top:266px;width:1px;height:2.3px;background:#444444;"></div><div style="position:absolute;left:522.5px;top:266px;width:1px;height:2.3px;background:#444444;"></div><div style="position:absolute;left:525.5px;top:266px;width:1px;height:2.3px;background:#444444;"></div><div style="position:absolute;left:527.5px;top:266px;width:1px;height:2.3px;background:#444444;"></div><div style="position:absolute;left:530.5px;top:266px;width:1px;height:2.3px;background:#444444;"></div><div style="position:absolute;left:532.5px;top:266px;width:1px;height:2.3px;background:#444444;"></div><div style="position:absolute;left:535.5px;top:266px;width:1px;height:2.3px;background:#444444;"></div><div style="position:absolute;left:537.5px;top:266px;width:1px;height:2.3px;background:#444444;"></div><div style="position:absolute;left:539.5px;top:266px;width:1px;height:2.3px;background:#444444;"></div><div style="position:absolute;left:542.5px;top:266px;width:1px;height:2.3px;background:#444444;"></div><div style="position:absolute;left:544.5px;top:266px;width:1px;height:2.3px;background:#444444;"></div><div style="position:absolute;left:547.5px;top:266px;width:1px;height:2.3px;background:#444444;"></div><div style="position:absolute;left:549.5px;top:266px;width:1px;height:2.3px;background:#444444;"></div><div style="position:absolute;left:552.5px;top:266px;width:1px;height:2.3px;background:#444444;"></div><div style="position:absolute;left:554.5px;top:266px;width:1px;height:2.3px;background:#444444;"></div><div style="position:absolute;left:556.5px;top:266px;width:1px;height:2.3px;background:#444444;"></div><div style="position:absolute;left:559.5px;top:266px;width:1px;height:2.3px;background:#444444;"></div><div style="position:absolute;left:561.85px;top:264px;width:1px;height:4.3px;background:#6a6a6a;"></div><div style="position:absolute;left:564.5px;top:266px;width:1px;height:2.3px;background:#444444;"></div><div style="position:absolute;left:566.5px;top:266px;width:1px;height:2.3px;background:#444444;"></div><div style="position:absolute;left:569.5px;top:266px;width:1px;height:2.3px;background:#444444;"></div><div style="position:absolute;left:571.5px;top:266px;width:1px;height:2.3px;background:#444444;"></div><div style="position:absolute;left:574.5px;top:266px;width:1px;height:2.3px;background:#444444;"></div><div style="position:absolute;left:576.5px;top:266px;width:1px;height:2.3px;background:#444444;"></div><div style="position:absolute;left:578.5px;top:266px;width:1px;height:2.3px;background:#444444;"></div><div style="position:absolute;left:581.5px;top:266px;width:1px;height:2.3px;background:#444444;"></div><div style="position:absolute;left:583.5px;top:266px;width:1px;height:2.3px;background:#444444;"></div><div style="position:absolute;left:586.5px;top:266px;width:1px;height:2.3px;background:#444444;"></div><div style="position:absolute;left:588.5px;top:266px;width:1px;height:2.3px;background:#444444;"></div><div style="position:absolute;left:591.5px;top:266px;width:1px;height:2.3px;background:#444444;"></div><div style="position:absolute;left:593.5px;top:266px;width:1px;height:2.3px;background:#444444;"></div><div style="position:absolute;left:595.5px;top:266px;width:1px;height:2.3px;background:#444444;"></div><div style="position:absolute;left:598.5px;top:266px;width:1px;height:2.3px;background:#444444;"></div><div style="position:absolute;left:600.5px;top:266px;width:1px;height:2.3px;background:#444444;"></div><div style="position:absolute;left:603.5px;top:266px;width:1px;height:2.3px;background:#444444;"></div><div style="position:absolute;left:605.7px;top:264px;width:1px;height:4.3px;background:#6a6a6a;"></div><div style="position:absolute;left:608.5px;top:266px;width:1px;height:2.3px;background:#444444;"></div><div style="position:absolute;left:610.5px;top:266px;width:1px;height:2.3px;background:#444444;"></div><div style="position:absolute;left:613.5px;top:266px;width:1px;height:2.3px;background:#444444;"></div><div style="position:absolute;left:615.5px;top:266px;width:1px;height:2.3px;background:#444444;"></div><div style="position:absolute;left:617.5px;top:266px;width:1px;height:2.3px;background:#444444;"></div><div style="position:absolute;left:620.5px;top:266px;width:1px;height:2.3px;background:#444444;"></div><div style="position:absolute;left:622.5px;top:266px;width:1px;height:2.3px;background:#444444;"></div><div style="position:absolute;left:625.5px;top:266px;width:1px;height:2.3px;background:#444444;"></div><div style="position:absolute;left:627.5px;top:266px;width:1px;height:2.3px;background:#444444;"></div><div style="position:absolute;left:630.5px;top:266px;width:1px;height:2.3px;background:#444444;"></div><div style="position:absolute;left:632.5px;top:266px;width:1px;height:2.3px;background:#444444;"></div><div style="position:absolute;left:634.5px;top:266px;width:1px;height:2.3px;background:#444444;"></div><div style="position:absolute;left:637.5px;top:266px;width:1px;height:2.3px;background:#444444;"></div><div style="position:absolute;left:639.5px;top:266px;width:1px;height:2.3px;background:#444444;"></div><div style="position:absolute;left:642.5px;top:266px;width:1px;height:2.3px;background:#444444;"></div><div style="position:absolute;left:644.5px;top:266px;width:1px;height:2.3px;background:#444444;"></div><div style="position:absolute;left:647.5px;top:266px;width:1px;height:2.3px;background:#444444;"></div><div style="position:absolute;left:649.55px;top:264px;width:1px;height:4.3px;background:#6a6a6a;"></div><div style="position:absolute;left:651.5px;top:266px;width:1px;height:2.3px;background:#444444;"></div><div style="position:absolute;left:654.5px;top:266px;width:1px;height:2.3px;background:#444444;"></div><div style="position:absolute;left:656.5px;top:266px;width:1px;height:2.3px;background:#444444;"></div><div style="position:absolute;left:659.5px;top:266px;width:1px;height:2.3px;background:#444444;"></div><div style="position:absolute;left:661.5px;top:266px;width:1px;height:2.3px;background:#444444;"></div><div style="position:absolute;left:664.5px;top:266px;width:1px;height:2.3px;background:#444444;"></div><div style="position:absolute;left:666.5px;top:266px;width:1px;height:2.3px;background:#444444;"></div><div style="position:absolute;left:669.5px;top:266px;width:1px;height:2.3px;background:#444444;"></div><div style="position:absolute;left:671.5px;top:266px;width:1px;height:2.3px;background:#444444;"></div><div style="position:absolute;left:673.5px;top:266px;width:1px;height:2.3px;background:#444444;"></div><div style="position:absolute;left:676.5px;top:266px;width:1px;height:2.3px;background:#444444;"></div><div style="position:absolute;left:678.5px;top:266px;width:1px;height:2.3px;background:#444444;"></div><div style="position:absolute;left:681.5px;top:266px;width:1px;height:2.3px;background:#444444;"></div><div style="position:absolute;left:683.5px;top:266px;width:1px;height:2.3px;background:#444444;"></div><div style="position:absolute;left:686.5px;top:266px;width:1px;height:2.3px;background:#444444;"></div><div style="position:absolute;left:688.5px;top:266px;width:1px;height:2.3px;background:#444444;"></div><div style="position:absolute;left:690.5px;top:266px;width:1px;height:2.3px;background:#444444;"></div><div style="position:absolute;left:693.4px;top:264px;width:1px;height:4.3px;background:#6a6a6a;"></div><div style="position:absolute;left:695.5px;top:266px;width:1px;height:2.3px;background:#444444;"></div><div style="position:absolute;left:698.5px;top:266px;width:1px;height:2.3px;background:#444444;"></div><div style="position:absolute;left:700.5px;top:266px;width:1px;height:2.3px;background:#444444;"></div><div style="position:absolute;left:703.5px;top:266px;width:1px;height:2.3px;background:#444444;"></div><div style="position:absolute;left:705.5px;top:266px;width:1px;height:2.3px;background:#444444;"></div><div style="position:absolute;left:708.5px;top:266px;width:1px;height:2.3px;background:#444444;"></div><div style="position:absolute;left:710.5px;top:266px;width:1px;height:2.3px;background:#444444;"></div><div style="position:absolute;left:712.5px;top:266px;width:1px;height:2.3px;background:#444444;"></div><div style="position:absolute;left:715.5px;top:266px;width:1px;height:2.3px;background:#444444;"></div><div style="position:absolute;left:717.5px;top:266px;width:1px;height:2.3px;background:#444444;"></div><div style="position:absolute;left:720.5px;top:266px;width:1px;height:2.3px;background:#444444;"></div><div style="position:absolute;left:722.5px;top:266px;width:1px;height:2.3px;background:#444444;"></div><div style="position:absolute;left:725.5px;top:266px;width:1px;height:2.3px;background:#444444;"></div><div style="position:absolute;left:727.5px;top:266px;width:1px;height:2.3px;background:#444444;"></div><div style="position:absolute;left:729.5px;top:266px;width:1px;height:2.3px;background:#444444;"></div><div style="position:absolute;left:732.5px;top:266px;width:1px;height:2.3px;background:#444444;"></div><div style="position:absolute;left:734.5px;top:266px;width:1px;height:2.3px;background:#444444;"></div><div style="position:absolute;left:737.2500000000001px;top:264px;width:1px;height:4.3px;background:#6a6a6a;"></div><div style="position:absolute;left:739.5px;top:266px;width:1px;height:2.3px;background:#444444;"></div><div style="position:absolute;left:742.5px;top:266px;width:1px;height:2.3px;background:#444444;"></div><div style="position:absolute;left:744.5px;top:266px;width:1px;height:2.3px;background:#444444;"></div><div style="position:absolute;left:746.5px;top:266px;width:1px;height:2.3px;background:#444444;"></div><div style="position:absolute;left:749.5px;top:266px;width:1px;height:2.3px;background:#444444;"></div><div style="position:absolute;left:751.5px;top:266px;width:1px;height:2.3px;background:#444444;"></div><div style="position:absolute;left:754.5px;top:266px;width:1px;height:2.3px;background:#444444;"></div><div style="position:absolute;left:147.5px;top:320.5px;width:107.5px;height:36px;background:#262626;"></div><div style="position:absolute;left:147.5px;top:320.5px;width:607.5px;height:0.9px;background:#2e2e2e;"></div><div style="position:absolute;left:147.5px;top:332.2px;width:607.5px;height:0.9px;background:#2e2e2e;"></div><div style="position:absolute;left:147.5px;top:343.6px;width:607.5px;height:0.9px;background:#2e2e2e;"></div><div style="position:absolute;left:147.5px;top:355.8px;width:607.5px;height:0.9px;background:#2e2e2e;"></div><div style="position:absolute;left:147.5px;top:396px;width:607.5px;height:0.9px;background:#2e2e2e;"></div><svg style="position:absolute;left:169.6px;top:323.4px;" width="5.6" height="6" viewBox="0 0 5.6 6"><path d="M1.3,3 V1.7 C1.3,0.4 3.9,0.3 4.3,1.6" stroke="#ececec" stroke-width="1" fill="none"/><rect x="0.5" y="2.8" width="4.2" height="2.9" rx="0.4" fill="#ececec"/></svg><svg style="position:absolute;left:193.6px;top:323.79999999999995px;" width="8" height="5.2" viewBox="0 0 8 5.2"><rect x="0.5" y="0.5" width="7" height="4.2" rx="1.2" fill="none" stroke="#ececec" stroke-width="0.9"/><path d="M2.4,0.5 V4.7 M2.4,2.6 C3.8,1.4 5.4,3.8 7,2.4" stroke="#ececec" stroke-width="0.8" fill="none"/></svg><svg style="position:absolute;left:206px;top:323.9px;" width="7.6" height="5" viewBox="0 0 7.6 5"><path d="M0.3,2.5 C2,0.1 5.6,0.1 7.3,2.5 C5.6,4.9 2,4.9 0.3,2.5 Z" fill="#ececec"/><circle cx="3.8" cy="2.5" r="1.3" fill="#2a2a2a"/><circle cx="3.8" cy="2.5" r="0.55" fill="#ececec"/></svg><div style="position:absolute;left:181.2px;top:326px;font-size:4.6px;line-height:4.6px;color:#9a9a9a;white-space:nowrap;-webkit-text-stroke:0.05px #9a9a9a;">V3</div><svg style="position:absolute;left:169.6px;top:335px;" width="5.6" height="6" viewBox="0 0 5.6 6"><path d="M1.3,3 V1.7 C1.3,0.4 3.9,0.3 4.3,1.6" stroke="#ececec" stroke-width="1" fill="none"/><rect x="0.5" y="2.8" width="4.2" height="2.9" rx="0.4" fill="#ececec"/></svg><svg style="position:absolute;left:193.6px;top:335.4px;" width="8" height="5.2" viewBox="0 0 8 5.2"><rect x="0.5" y="0.5" width="7" height="4.2" rx="1.2" fill="none" stroke="#ececec" stroke-width="0.9"/><path d="M2.4,0.5 V4.7 M2.4,2.6 C3.8,1.4 5.4,3.8 7,2.4" stroke="#ececec" stroke-width="0.8" fill="none"/></svg><svg style="position:absolute;left:206px;top:335.5px;" width="7.6" height="5" viewBox="0 0 7.6 5"><path d="M0.3,2.5 C2,0.1 5.6,0.1 7.3,2.5 C5.6,4.9 2,4.9 0.3,2.5 Z" fill="#ececec"/><circle cx="3.8" cy="2.5" r="1.3" fill="#2a2a2a"/><circle cx="3.8" cy="2.5" r="0.55" fill="#ececec"/></svg><div style="position:absolute;left:181.2px;top:338px;font-size:4.6px;line-height:4.6px;color:#9a9a9a;white-space:nowrap;-webkit-text-stroke:0.05px #9a9a9a;">V2</div><svg style="position:absolute;left:169.6px;top:346.7px;" width="5.6" height="6" viewBox="0 0 5.6 6"><path d="M1.3,3 V1.7 C1.3,0.4 3.9,0.3 4.3,1.6" stroke="#ececec" stroke-width="1" fill="none"/><rect x="0.5" y="2.8" width="4.2" height="2.9" rx="0.4" fill="#ececec"/></svg><svg style="position:absolute;left:193.6px;top:347.09999999999997px;" width="8" height="5.2" viewBox="0 0 8 5.2"><rect x="0.5" y="0.5" width="7" height="4.2" rx="1.2" fill="none" stroke="#ececec" stroke-width="0.9"/><path d="M2.4,0.5 V4.7 M2.4,2.6 C3.8,1.4 5.4,3.8 7,2.4" stroke="#ececec" stroke-width="0.8" fill="none"/></svg><svg style="position:absolute;left:206px;top:347.2px;" width="7.6" height="5" viewBox="0 0 7.6 5"><path d="M0.3,2.5 C2,0.1 5.6,0.1 7.3,2.5 C5.6,4.9 2,4.9 0.3,2.5 Z" fill="#ececec"/><circle cx="3.8" cy="2.5" r="1.3" fill="#2a2a2a"/><circle cx="3.8" cy="2.5" r="0.55" fill="#ececec"/></svg><div style="position:absolute;left:176.8px;top:344px;width:14.6px;height:10.9px;background:#2f74bf;"></div><div style="position:absolute;left:181.2px;top:349px;font-size:4.6px;line-height:4.6px;color:#c0d6ee;white-space:nowrap;-webkit-text-stroke:0.05px #c0d6ee;">V1</div><div style="position:absolute;left:153.2px;top:357.4px;width:14.8px;height:39.4px;background:#2f74bf;"></div><div style="position:absolute;left:158px;top:372px;font-size:4.6px;line-height:4.6px;color:#c0d6ee;white-space:nowrap;-webkit-text-stroke:0.05px #c0d6ee;">A1</div><div style="position:absolute;left:176.8px;top:357.2px;width:15px;height:39.2px;background:#2f74bf;"></div><div style="position:absolute;left:181.4px;top:372px;font-size:4.6px;line-height:4.6px;color:#c0d6ee;white-space:nowrap;-webkit-text-stroke:0.05px #c0d6ee;">A1</div><svg style="position:absolute;left:170px;top:369.4px;" width="5.5" height="5.6" viewBox="0 0 5.5 5.6"><path d="M1.1,2.6 V1.6 C1.1,0.5 3.4,0.2 3.9,1.5" stroke="#ececec" stroke-width="0.9" fill="none"/><rect x="0.4" y="2.5" width="4.6" height="3" rx="0.4" fill="#ececec"/></svg><svg style="position:absolute;left:194.6px;top:360.5px;" width="7" height="5.4" viewBox="0 0 7 5.4"><rect x="0.4" y="0.4" width="6.2" height="4.6" rx="0.8" fill="none" stroke="#ececec" stroke-width="0.8"/><path d="M2.2,0.4 V5 M0.4,2.7 H6.6" stroke="#ececec" stroke-width="0.7"/></svg><div style="position:absolute;left:207.8px;top:362px;font-size:4.6px;line-height:4.6px;color:#b0b0b0;white-space:nowrap;-webkit-text-stroke:0.1px #b0b0b0;">M</div><div style="position:absolute;left:221px;top:362px;font-size:4.6px;line-height:4.6px;color:#b0b0b0;white-space:nowrap;-webkit-text-stroke:0.1px #b0b0b0;">S</div><svg style="position:absolute;left:232px;top:359.4px;" width="5.2" height="7.8" viewBox="0 0 5.2 7.8"><rect x="1.2" y="0.4" width="2.8" height="4.6" rx="1.4" fill="#ececec"/><path d="M0.5,3.4 C0.5,6 4.7,6 4.7,3.4 M2.6,5.6 V7.5" stroke="#ececec" stroke-width="0.7" fill="none"/></svg><div style="position:absolute;left:192.6px;top:373px;font-size:4.95px;line-height:4.95px;color:#dcdcdc;white-space:nowrap;-webkit-text-stroke:0.25px #dcdcdc;">Audio 1</div><svg style="position:absolute;left:194.2px;top:383.6px;" width="6" height="5.4" viewBox="0 0 6 5.4"><path d="M2.4,0.5 L4.4,2.5 L2.4,4.5 L0.4,2.5 Z" fill="none" stroke="#ececec" stroke-width="0.9"/><rect x="5" y="4.2" width="0.9" height="0.9" fill="#ececec"/></svg><svg style="position:absolute;left:208.8px;top:384px;" width="3.2" height="5" viewBox="0 0 3.2 5"><path d="M2.6,0.4 L0.6,2.5 L2.6,4.6" stroke="#8a8a8a" stroke-width="0.8" fill="none"/></svg><svg style="position:absolute;left:220px;top:384.4px;" width="4.2" height="4.2" viewBox="0 0 4.2 4.2"><circle cx="2.1" cy="2.1" r="1.5" fill="none" stroke="#bdbdbd" stroke-width="0.9"/></svg><svg style="position:absolute;left:233px;top:384px;" width="3.2" height="5" viewBox="0 0 3.2 5"><path d="M0.6,0.4 L2.6,2.5 L0.6,4.6" stroke="#8a8a8a" stroke-width="0.8" fill="none"/></svg><div style="position:absolute;left:176.8px;top:397.4px;width:15px;height:3px;background:#2f74bf;"></div><svg style="position:absolute;left:170px;top:397.8px;" width="6" height="3" viewBox="0 0 6 3"><path d="M1.1,2.6 V1.6 C1.1,0.5 3.4,0.2 3.9,1.5" stroke="#ececec" stroke-width="0.9" fill="none"/></svg><div style="position:absolute;left:194.8px;top:398.6px;width:6px;height:1.4px;background:#bdbdbd;border-radius:0.8px 0.8px 0 0"></div><svg style="position:absolute;left:254px;top:260.3px;" width="5" height="9.5" viewBox="0 0 5 9.5"><path d="M0.6,2 C0.6,0.6 4.4,0.6 4.4,2 V6.6 L2.5,9 L0.6,6.6 Z" fill="#78b4ee" stroke="#1d3a66" stroke-width="0.7"/></svg><div style="position:absolute;left:254.5px;top:268px;width:1.5px;height:132px;background:#5070a4;"></div><div style="position:absolute;left:255.1px;top:357.1px;width:347px;height:39px;background:#e6efe9;"></div><div style="position:absolute;left:256.9px;top:359.2px;width:342.9px;height:35.3px;background:#3e8c6b;"></div><div style="position:absolute;left:256.9px;top:375.8px;width:342.9px;height:1.5px;background:#8ecab0;"></div><div style="position:absolute;left:256.9px;top:377.3px;width:342.9px;height:0.8px;background:#2f7052;"></div><div style="position:absolute;left:258.8px;top:358.5px;width:5.6px;height:5.1px;background:#cdcdcd;border-radius:0.8px"></div><svg style="position:absolute;left:259.6px;top:359.3px;" width="4" height="3.6" viewBox="0 0 4 3.6"><path d="M1,3.4 V1.2 C1,0.5 1.6,0.4 2.2,0.6 M0.4,1.8 H1.8 M2,1.6 L3.5,3.4 M3.5,1.6 L2,3.4" stroke="#222" stroke-width="0.8" fill="none"/></svg><svg style="position:absolute;left:256.9px;top:375px;" width="343" height="19" viewBox="0 0 343 19"><polygon points="0,19 0.0,16.10 1.3,15.17 2.6,15.15 3.9,15.85 5.2,15.56 6.5,16.46 7.8,17.36 9.1,15.45 10.4,15.91 11.7,15.65 13.0,16.72 14.3,17.69 15.6,17.04 16.9,18.00 18.2,17.96 19.5,17.96 20.8,18.00 22.1,16.91 23.4,16.16 24.7,16.56 26.0,17.03 27.3,16.44 28.6,15.68 29.9,14.67 31.2,15.77 32.5,14.87 33.8,13.81 35.1,14.75 36.4,14.14 37.7,15.05 39.0,14.02 40.3,14.86 41.6,15.74 42.9,15.09 44.2,14.96 45.5,15.64 46.8,16.45 48.1,17.29 49.4,17.93 50.7,16.89 52.0,17.32 53.3,17.96 54.6,17.18 55.9,18.00 57.2,18.00 58.5,17.40 59.8,17.85 61.1,18.00 62.4,18.00 63.7,18.00 65.0,16.99 66.3,16.83 67.6,17.52 68.9,16.63 70.2,17.18 71.5,16.65 72.8,17.32 74.1,16.48 75.4,16.65 76.7,17.66 78.0,18.00 79.3,18.00 80.6,17.79 81.9,18.00 83.2,18.00 84.5,17.87 85.8,17.62 87.1,16.70 88.4,17.76 89.7,17.88 91.0,18.00 92.3,17.84 93.6,18.00 94.9,16.94 96.2,16.52 97.5,16.80 98.8,16.41 100.1,14.26 101.4,15.43 102.7,15.83 104.0,16.76 105.3,16.24 106.6,15.72 107.9,15.08 109.2,15.40 110.5,14.52 111.8,14.70 113.1,13.90 114.4,13.80 115.7,13.80 117.0,14.72 118.3,13.80 119.6,13.80 120.9,13.80 122.2,13.93 123.5,14.85 124.8,15.88 126.1,15.92 127.4,15.49 128.7,15.23 130.0,14.97 131.3,15.38 132.6,16.11 133.9,15.75 135.2,14.89 136.5,14.53 137.8,14.68 139.1,13.80 140.4,14.05 141.7,14.46 143.0,14.47 144.3,13.80 145.6,13.80 146.9,14.53 148.2,15.02 149.5,15.21 150.8,15.23 152.1,14.48 153.4,14.58 154.7,15.61 156.0,16.62 157.3,16.47 158.6,15.19 159.9,14.60 161.2,16.50 162.5,17.50 163.8,17.62 165.1,17.28 166.4,16.27 167.7,16.93 169.0,16.66 170.3,17.17 171.6,17.67 172.9,17.23 174.2,16.98 175.5,17.21 176.8,16.32 178.1,15.37 179.4,16.18 180.7,15.91 182.0,16.18 183.3,15.34 184.6,14.37 185.9,14.03 187.2,13.80 188.5,13.80 189.8,14.43 191.1,13.80 192.4,13.80 193.7,14.20 195.0,13.80 196.3,14.72 197.6,14.61 198.9,13.33 200.2,15.59 201.5,16.31 202.8,15.68 204.1,16.45 205.4,15.96 206.7,15.54 208.0,15.56 209.3,16.47 210.6,16.41 211.9,15.91 213.2,15.86 214.5,15.73 215.8,15.99 217.1,15.11 218.4,14.34 219.7,14.28 221.0,14.94 222.3,14.93 223.6,15.97 224.9,15.94 226.2,15.27 227.5,15.29 228.8,16.25 230.1,16.44 231.4,15.51 232.7,15.57 234.0,15.71 235.3,14.83 236.6,15.23 237.9,14.97 239.2,15.79 240.5,16.84 241.8,17.44 243.1,17.83 244.4,17.57 245.7,17.06 247.0,17.04 248.3,17.70 249.6,17.84 250.9,18.00 252.2,18.00 253.5,17.71 254.8,17.65 256.1,17.40 257.4,17.99 258.7,17.31 260.0,17.71 261.3,16.78 262.6,15.68 263.9,16.49 265.2,15.99 266.5,16.88 267.8,17.05 269.1,17.87 270.4,16.76 271.7,17.06 273.0,16.03 274.3,16.02 275.6,16.01 276.9,16.70 278.2,16.51 279.5,17.53 280.8,18.00 282.1,18.00 283.4,16.92 284.7,17.81 286.0,16.82 287.3,16.24 288.6,16.31 289.9,16.46 291.2,17.53 292.5,16.78 293.8,16.88 295.1,17.09 296.4,17.82 297.7,18.00 299.0,17.34 300.3,16.54 301.6,16.75 302.9,16.74 304.2,16.07 305.5,15.17 306.8,14.56 308.1,14.76 309.4,13.93 310.7,13.91 312.0,14.31 313.3,15.36 314.6,14.72 315.9,15.48 317.2,16.11 318.5,15.99 319.8,15.90 321.1,16.02 322.4,15.75 323.7,15.96 325.0,15.05 326.3,16.37 327.6,16.67 328.9,17.16 330.2,17.67 331.5,17.49 332.8,17.66 334.1,17.79 335.4,17.90 336.7,18.20 338.0,16.77 339.3,18.20 340.6,18.20 341.9,18.20 343,19" fill="#e2eee6"/></svg><div style="position:absolute;left:257px;top:389px;width:10px;height:5.5px;background:#1d3a2b;"></div><svg style="position:absolute;left:258.5px;top:389.8px;" width="7" height="4" viewBox="0 0 7 4"><path d="M0.5,3.5 L2,0.8 L3.5,3.5 M4.6,0.6 V3.5" stroke="#8fb9a2" stroke-width="0.7" fill="none"/></svg><div style="position:absolute;left:686px;top:385px;font-size:11px;line-height:11px;color:#0a0a0a;white-space:nowrap;">wtvid.com</div><div style="position:absolute;left:318.2px;top:167px;width:134.5px;height:260px;background:linear-gradient(180deg,#e4e6e5 0%,#e3e4e4 40%,#e1e3e2 100%);border-radius:3.5px;box-shadow:0 0 1px rgba(0,0,0,0.4)"></div><div style="position:absolute;left:327.7px;top:170px;font-size:6.5px;line-height:6.5px;color:#161616;white-space:nowrap;-webkit-text-stroke:0.12px #161616;">Cut</div><div style="position:absolute;left:327.7px;top:179px;font-size:6.5px;line-height:6.5px;color:#161616;white-space:nowrap;-webkit-text-stroke:0.12px #161616;">Copy</div><div style="position:absolute;left:327.7px;top:188px;font-size:6.5px;line-height:6.5px;color:#b4b6b4;white-space:nowrap;-webkit-text-stroke:0.12px #b4b6b4;">Paste Attributes...</div><div style="position:absolute;left:327.7px;top:196px;font-size:6.5px;line-height:6.5px;color:#161616;white-space:nowrap;-webkit-text-stroke:0.12px #161616;">Remove Attributes...</div><div style="position:absolute;left:327.7px;top:205px;font-size:6.5px;line-height:6.5px;color:#161616;white-space:nowrap;-webkit-text-stroke:0.12px #161616;">Clear</div><div style="position:absolute;left:327.7px;top:214px;font-size:6.5px;line-height:6.5px;color:#161616;white-space:nowrap;-webkit-text-stroke:0.12px #161616;">Ripple Delete</div><div style="position:absolute;left:318.2px;top:222.6px;width:134.5px;height:0.9px;background:#d2d4d2;"></div><div style="position:absolute;left:327.7px;top:228px;font-size:6.5px;line-height:6.5px;color:#161616;white-space:nowrap;-webkit-text-stroke:0.12px #161616;">Edit Original</div><div style="position:absolute;left:318.2px;top:234.3px;width:134.5px;height:8.7px;background:#2f7fe2;"></div><div style="position:absolute;left:327.7px;top:236px;font-size:6.5px;line-height:6.5px;color:#ffffff;white-space:nowrap;-webkit-text-stroke:0.15px #ffffff;">Edit Clip In Adobe Audition</div><div style="position:absolute;left:327.7px;top:245px;font-size:6.5px;line-height:6.5px;color:#b4b6b4;white-space:nowrap;-webkit-text-stroke:0.12px #b4b6b4;">License...</div><div style="position:absolute;left:327.7px;top:254px;font-size:6.5px;line-height:6.5px;color:#b4b6b4;white-space:nowrap;-webkit-text-stroke:0.12px #b4b6b4;">Replace With After Effects Composition</div><div style="position:absolute;left:327.7px;top:262px;font-size:6.5px;line-height:6.5px;color:#161616;white-space:nowrap;-webkit-text-stroke:0.12px #161616;">Replace With Clip</div><div style="position:absolute;left:327.7px;top:271px;font-size:6.5px;line-height:6.5px;color:#161616;white-space:nowrap;-webkit-text-stroke:0.12px #161616;">Render and Replace...</div><div style="position:absolute;left:327.7px;top:280px;font-size:6.5px;line-height:6.5px;color:#b4b6b4;white-space:nowrap;-webkit-text-stroke:0.12px #b4b6b4;">Restore Unrendered</div><div style="position:absolute;left:318.2px;top:289.1px;width:134.5px;height:0.9px;background:#d2d4d2;"></div><div style="position:absolute;left:327.7px;top:294px;font-size:6.5px;line-height:6.5px;color:#b4b6b4;white-space:nowrap;-webkit-text-stroke:0.12px #b4b6b4;">Duplicate</div><div style="position:absolute;left:318.2px;top:302.6px;width:134.5px;height:0.9px;background:#d2d4d2;"></div><div style="position:absolute;left:327.7px;top:308px;font-size:6.5px;line-height:6.5px;color:#161616;white-space:nowrap;-webkit-text-stroke:0.12px #161616;">Enable</div><div style="position:absolute;left:327.7px;top:317px;font-size:6.5px;line-height:6.5px;color:#b4b6b4;white-space:nowrap;-webkit-text-stroke:0.12px #b4b6b4;">Unlink</div><div style="position:absolute;left:327.7px;top:325px;font-size:6.5px;line-height:6.5px;color:#b4b6b4;white-space:nowrap;-webkit-text-stroke:0.12px #b4b6b4;">Group</div><div style="position:absolute;left:327.7px;top:334px;font-size:6.5px;line-height:6.5px;color:#b4b6b4;white-space:nowrap;-webkit-text-stroke:0.12px #b4b6b4;">Ungroup</div><div style="position:absolute;left:327.7px;top:343px;font-size:6.5px;line-height:6.5px;color:#b4b6b4;white-space:nowrap;-webkit-text-stroke:0.12px #b4b6b4;">Synchronize</div><div style="position:absolute;left:327.7px;top:351px;font-size:6.5px;line-height:6.5px;color:#b4b6b4;white-space:nowrap;-webkit-text-stroke:0.12px #b4b6b4;">Merge Clips...</div><div style="position:absolute;left:327.7px;top:360px;font-size:6.5px;line-height:6.5px;color:#161616;white-space:nowrap;-webkit-text-stroke:0.12px #161616;">Nest...</div><div style="position:absolute;left:327.7px;top:369px;font-size:6.5px;line-height:6.5px;color:#b4b6b4;white-space:nowrap;-webkit-text-stroke:0.12px #b4b6b4;">Multi-Camera</div><div style="position:absolute;left:318.2px;top:377.6px;width:134.5px;height:0.9px;background:#d2d4d2;"></div><div style="position:absolute;left:327.7px;top:382px;font-size:6.5px;line-height:6.5px;color:#161616;white-space:nowrap;-webkit-text-stroke:0.12px #161616;">Label</div><div style="position:absolute;left:318.2px;top:391.6px;width:134.5px;height:0.9px;background:#d2d4d2;"></div><div style="position:absolute;left:327.7px;top:396px;font-size:6.5px;line-height:6.5px;color:#161616;white-space:nowrap;-webkit-text-stroke:0.12px #161616;">Speed/Duration...</div><svg style="position:absolute;left:320.6px;top:307.6px;" width="5.6" height="5.6" viewBox="0 0 5.6 5.6"><path d="M0.7,2.9 L2.1,4.7 L5,0.5" stroke="#141414" stroke-width="1.35" fill="none" stroke-linecap="round"/></svg><svg style="position:absolute;left:442.6px;top:262.6px;" width="4" height="4.6" viewBox="0 0 4 4.6"><path d="M0.3,0.2 L3.6,2.3 L0.3,4.4 Z" fill="#161616"/></svg><svg style="position:absolute;left:442.6px;top:369.2px;" width="4" height="4.6" viewBox="0 0 4 4.6"><path d="M0.3,0.2 L3.6,2.3 L0.3,4.4 Z" fill="#b4b6b4"/></svg><svg style="position:absolute;left:442.6px;top:382.8px;" width="4" height="4.6" viewBox="0 0 4 4.6"><path d="M0.3,0.2 L3.6,2.3 L0.3,4.4 Z" fill="#161616"/></svg><svg style="position:absolute;left:371.5px;top:234.6px;" width="6" height="8" viewBox="0 0 6 8"><path d="M0.5,0.5 L0.5,6.5 L2,5.2 L3.2,7.6 L4.2,7.1 L3,4.8 L5,4.8 Z" fill="#111" stroke="#eee" stroke-width="0.6"/></svg><div style="position:absolute;left:452.4px;top:193px;font-size:7.5px;line-height:7.5px;color:#5aa8f2;white-space:nowrap;-webkit-text-stroke:0.25px #5aa8f2;font-weight:bold;">0</div></body></html>
